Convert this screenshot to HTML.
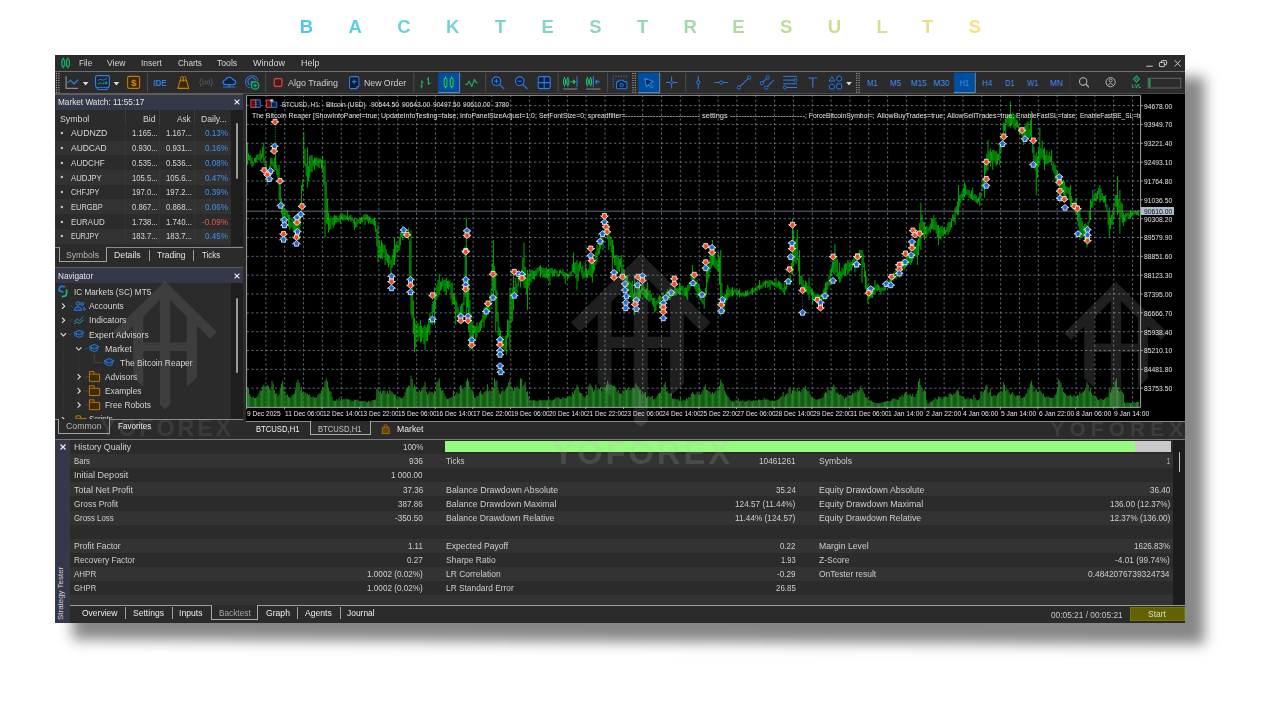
<!DOCTYPE html>
<html lang="en"><head><meta charset="utf-8"><title>Backtest Results</title>
<style>
html,body{margin:0;padding:0;}
body{width:1280px;height:720px;overflow:hidden;background:#fff;position:relative;font-family:"Liberation Sans",sans-serif;}
div,svg,span{position:absolute;box-sizing:border-box;}
.t{white-space:nowrap;}
.ttl{left:299.7px;top:13.1px;height:28px;white-space:pre;font-size:18.5px;line-height:28px;font-weight:bold;letter-spacing:35.4px;word-spacing:-40.54px;color:transparent;background:linear-gradient(90deg,rgb(77,200,232) 0px,rgb(118,211,208) 160px,rgb(158,216,172) 380px,rgb(205,222,140) 540px,rgb(250,224,128) 682px);-webkit-background-clip:text;background-clip:text;}
</style></head>
<body>
<div class="ttl">BACKTEST RESULTS</div>
<svg style="left:0;top:0;width:1280px;height:720px" viewBox="0 0 1280 720"><defs><filter id="sb" x="-5%" y="-10%" width="110%" height="120%"><feGaussianBlur stdDeviation="7"/></filter></defs><polygon points="72.5,77 1204.4,77 1204.4,644 72.5,639.5" fill="#000" fill-opacity="0.475" filter="url(#sb)"/></svg>
<div style="left:55.2px;top:55.45px;width:1130.25px;height:567.35px;background:#2b2b2b;"></div>
<svg style="left:59.5px;top:57.4px;width:12px;height:12px" viewBox="0 0 12 12"><g fill="#0c4a2c" stroke="#1fae6a" stroke-width="1.15"><rect x="1.8" y="2.5" width="2.9" height="6.9" rx="1.1"/><rect x="6.5" y="2.5" width="2.9" height="6.9" rx="1.1"/><path d="M3.25 0.6V2.5M3.25 9.4V11.3M7.95 0.6V2.5M7.95 9.4V11.3" fill="none"/></g></svg>
<div class="t" style="top:57.94px;font-size:8.7px;line-height:11.31px;color:#d6d6d6;left:78.75px;transform-origin:0 50%;transform:scaleX(0.9416);">File</div>
<div class="t" style="top:57.94px;font-size:8.7px;line-height:11.31px;color:#d6d6d6;left:107.15px;transform-origin:0 50%;transform:scaleX(0.9866);">View</div>
<div class="t" style="top:57.94px;font-size:8.7px;line-height:11.31px;color:#d6d6d6;left:141.4px;transform-origin:0 50%;transform:scaleX(0.9628);">Insert</div>
<div class="t" style="top:57.94px;font-size:8.7px;line-height:11.31px;color:#d6d6d6;left:177.65px;transform-origin:0 50%;transform:scaleX(0.9346);">Charts</div>
<div class="t" style="top:57.94px;font-size:8.7px;line-height:11.31px;color:#d6d6d6;left:217.15px;transform-origin:0 50%;transform:scaleX(0.9946);">Tools</div>
<div class="t" style="top:57.94px;font-size:8.7px;line-height:11.31px;color:#d6d6d6;left:252.65px;transform-origin:0 50%;transform:scaleX(1.0406);">Window</div>
<div class="t" style="top:57.94px;font-size:8.7px;line-height:11.31px;color:#d6d6d6;left:300.9px;transform-origin:0 50%;transform:scaleX(1.0311);">Help</div>
<svg style="left:1144px;top:58px;width:40px;height:12px" viewBox="0 0 40 12"><g fill="none" stroke="#d8d8d8" stroke-width="0.9"><path d="M2.2 8.2H8.8"/><rect x="15.4" y="4.4" width="5" height="4.2" rx="0.6"/><path d="M17.4 4.4V3.2Q17.4 2.6 18 2.6H22Q22.6 2.6 22.6 3.2V6.2Q22.6 6.8 22 6.8H20.4"/><path d="M30.6 2.2L36.6 8.6M36.6 2.2L30.6 8.6"/></g></svg>
<div style="left:55.2px;top:71.2px;width:1130.25px;height:0.9px;background:#6e6e6e;"></div>
<div style="left:55.2px;top:93.2px;width:1130.25px;height:0.9px;background:#484848;"></div>
<div style="left:55.2px;top:93.3px;width:188px;height:1.4px;background:#5e5e5e;"></div>
<svg style="left:0;top:0;width:1280px;height:100px" viewBox="0 0 1280 100" font-family="Liberation Sans, sans-serif"><rect x="56" y="72.9" width="1.1" height="1.1" fill="#a8a8a8"/><rect x="56" y="75.26" width="1.1" height="1.1" fill="#a8a8a8"/><rect x="56" y="77.61" width="1.1" height="1.1" fill="#a8a8a8"/><rect x="56" y="79.97" width="1.1" height="1.1" fill="#a8a8a8"/><rect x="56" y="82.32" width="1.1" height="1.1" fill="#a8a8a8"/><rect x="56" y="84.68" width="1.1" height="1.1" fill="#a8a8a8"/><rect x="56" y="87.03" width="1.1" height="1.1" fill="#a8a8a8"/><rect x="56" y="89.39" width="1.1" height="1.1" fill="#a8a8a8"/><rect x="56" y="91.74" width="1.1" height="1.1" fill="#a8a8a8"/><rect x="58.36" y="72.9" width="1.1" height="1.1" fill="#a8a8a8"/><rect x="58.36" y="75.26" width="1.1" height="1.1" fill="#a8a8a8"/><rect x="58.36" y="77.61" width="1.1" height="1.1" fill="#a8a8a8"/><rect x="58.36" y="79.97" width="1.1" height="1.1" fill="#a8a8a8"/><rect x="58.36" y="82.32" width="1.1" height="1.1" fill="#a8a8a8"/><rect x="58.36" y="84.68" width="1.1" height="1.1" fill="#a8a8a8"/><rect x="58.36" y="87.03" width="1.1" height="1.1" fill="#a8a8a8"/><rect x="58.36" y="89.39" width="1.1" height="1.1" fill="#a8a8a8"/><rect x="58.36" y="91.74" width="1.1" height="1.1" fill="#a8a8a8"/><path d="M66.1 76.2V88.3H78.1" stroke="#8a8a8a" stroke-width="1.25" fill="none"/><path d="M68 82.7L70.5 80.2L74 84L77.8 80" stroke="#2f7be0" stroke-width="1.2" fill="none" stroke-linejoin="round" stroke-linecap="round"/><path d="M82.8 82.1h5.6l-2.8 3.3z" fill="#dcdcdc"/><path d="M97.2 75.6H107.7Q109.4 75.6 109.4 77.3V85.8Q109.4 87.3 107.9 87.6L107 89.5H98L97 87.6Q95.5 87.3 95.5 85.8V77.3Q95.5 75.6 97.2 75.6Z" stroke="#2f7be0" stroke-width="1.15" fill="#1c2634"/><path d="M96.2 87.4H108.8" stroke="#2f7be0" stroke-width="0.9"/><path d="M98 80.6Q99.6 78.6 101.2 79.6T104.2 79.8T107 78.4" stroke="#2f7be0" stroke-width="0.9" fill="none"/><path d="M98.4 84.2V83M100 84.2V82.3M101.9 84.2V83M103.7 84.2V82.2M105.4 84.2V81.6M106.8 84.2V81.4" stroke="#1fae6a" stroke-width="0.95" fill="none"/><path d="M113.6 82.1h5.6l-2.8 3.3z" fill="#dcdcdc"/><rect x="127.6" y="76.4" width="12" height="12" rx="1.7" stroke="#c27a08" stroke-width="1.1" fill="#3a2804"/><text x="133.6" y="86.2" font-size="9.6" font-weight="bold" fill="#e08a08" text-anchor="middle">$</text><path d="M147.5 72.9V92.3" stroke="#505050" stroke-width="0.9" fill="none"/><text x="153.6" y="86" font-size="9.4" font-weight="bold" fill="#2f7be0" textLength="13" lengthAdjust="spacingAndGlyphs">IDE</text><path d="M180.2 80.2H186.4L188.7 88.4H177.9Z" stroke="#c27a08" stroke-width="1.1" fill="#3a2804" stroke-linejoin="round"/><path d="M180.6 81.6V78.3Q180.6 76.5 182 76.5Q183.3 76.5 183.3 78.3V81.6M183.3 81.6V78.3Q183.3 76.5 184.7 76.5Q186 76.5 186 78.3V81.6" stroke="#c27a08" stroke-width="0.9" fill="none"/><g stroke="#585858" stroke-width="0.95" fill="none"><circle cx="206.1" cy="82.4" r="1.5"/><path d="M203.4 79.6Q201.8 82.4 203.4 85.2M208.8 79.6Q210.4 82.4 208.8 85.2M201.2 78.2Q198.4 82.4 201.2 86.6M211 78.2Q213.8 82.4 211 86.6"/></g><path d="M226 84.6Q223 84.6 223 82.3Q223 80.2 225.6 80Q226.2 77.3 229.2 77.2Q232 77.2 232.9 79.7Q235.6 79.8 235.6 82.2Q235.6 84.6 233 84.6Z" stroke="#2f7be0" stroke-width="1.15" fill="#0c2240" stroke-linejoin="round"/><path d="M229.3 84.6V87M223.2 87H235.4" stroke="#2f7be0" stroke-width="1.1" fill="none"/><g stroke="#2f7be0" stroke-width="1.05" fill="none"><path d="M250 87.9A6.2 6.2 0 1 1 258 81"/><path d="M250.6 85.3A3.9 3.9 0 1 1 255.5 80.3"/><circle cx="252" cy="82.3" r="1.1" fill="#2f7be0"/></g><circle cx="255.1" cy="85.4" r="3.7" stroke="#1fae6a" stroke-width="1.2" fill="#0a4a2a"/><path d="M253.2 85.4H257M255.1 83.5V87.3" stroke="#1fae6a" stroke-width="1"/><path d="M265.7 72.9V92.3" stroke="#505050" stroke-width="0.9" fill="none"/><rect x="274.3" y="78.6" width="7.6" height="7.8" rx="1.3" stroke="#d24a44" stroke-width="1.2" fill="#481a10"/><path d="M351 76.6H357.4Q358.9 76.6 358.9 78.1V86.2L356.6 88.6H351Q349.5 88.6 349.5 87.1V78.1Q349.5 76.6 351 76.6Z" stroke="#2f7be0" stroke-width="1.05" fill="#101c30" stroke-linejoin="round"/><path d="M352 81.6H356.4M354.2 79.4V83.8" stroke="#2f7be0" stroke-width="1.1"/><path d="M356.3 88.9V86.3H359Z" fill="#2f7be0"/><path d="M413.8 72.9V92.3" stroke="#505050" stroke-width="0.9" fill="none"/><path d="M421.8 80.2V88.4M420.2 86.2H421.8M421.8 82.4H423.4M428.4 77V85M426.8 79.2H428.4M428.4 83.4H430.6" stroke="#1fae6a" stroke-width="1.15" fill="none"/><rect x="438.2" y="72.6" width="21.4" height="20.2" fill="#004f9e"/><path d="M438.2 92.6H459.6V72.6" stroke="#b9c4d2" stroke-width="0.7" fill="none" opacity="0.8"/><g stroke="#2ac47a" stroke-width="1.05" fill="#0a5a30"><rect x="444.2" y="78.3" width="2.7" height="8.4" rx="1"/><rect x="450.3" y="78.3" width="2.7" height="8.4" rx="1"/><path d="M445.55 76.6V78.3M445.55 86.7V88.6M451.65 76.6V78.3M451.65 86.7V88.6" fill="none"/></g><path d="M465.4 84.4H467.2L469.2 81.3L471.8 86.4L474.4 79.4L476.2 82.6H477.6" stroke="#1fae6a" stroke-width="1.15" fill="none" stroke-linejoin="round"/><path d="M485.7 72.9V92.3" stroke="#505050" stroke-width="0.9" fill="none"/><circle cx="496.4" cy="81.2" r="4.3" stroke="#2f7be0" stroke-width="1.15" fill="#0c2240"/><path d="M499.6 84.4L503.7 88.6" stroke="#2f7be0" stroke-width="1.25" stroke-linecap="round"/><path d="M494.2 81.2H498.6" stroke="#2f7be0" stroke-width="1.1"/><path d="M496.4 79V83.4" stroke="#2f7be0" stroke-width="1.1"/><circle cx="519.7" cy="81.2" r="4.3" stroke="#2f7be0" stroke-width="1.15" fill="#0c2240"/><path d="M522.9 84.4L527 88.6" stroke="#2f7be0" stroke-width="1.25" stroke-linecap="round"/><path d="M517.5 81.2H521.9" stroke="#2f7be0" stroke-width="1.1"/><rect x="538.2" y="76.6" width="12" height="12" rx="1.6" stroke="#2f7be0" stroke-width="1.15" fill="#0c2240"/><path d="M544.2 76.6V88.6M538.2 82.6H550.2" stroke="#2f7be0" stroke-width="1.1"/><path d="M558.1 72.9V92.3" stroke="#505050" stroke-width="0.9" fill="none"/><g stroke="#2ac47a" stroke-width="0.95" fill="#0a5a30"><rect x="563.6" y="78.6" width="1.9" height="6.2" rx="0.8"/><rect x="566.9" y="78.6" width="1.9" height="6.2" rx="0.8"/><path d="M564.55 77V78.6M564.55 84.8V86.6M567.85 77V78.6M567.85 84.8V86.6" fill="none"/></g><path d="M570.4 81.8H575M573.2 79.8L575.2 81.8L573.2 83.8" stroke="#2ac47a" stroke-width="1.05" fill="none"/><path d="M577 76.2V87" stroke="#2f7be0" stroke-width="1.1"/><path d="M563.4 89H577.4" stroke="#808080" stroke-width="1.1"/><g stroke="#2ac47a" stroke-width="0.95" fill="#0a5a30"><rect x="586.4" y="78.6" width="1.9" height="6.2" rx="0.8"/><rect x="589.7" y="78.6" width="1.9" height="6.2" rx="0.8"/><path d="M587.35 77V78.6M587.35 84.8V86.6M590.65 77V78.6M590.65 84.8V86.6" fill="none"/></g><path d="M593.4 76.2V87" stroke="#2f7be0" stroke-width="1.1"/><path d="M595.6 81.8H600.2M597.4 79.8L595.4 81.8L597.4 83.8" stroke="#2f7be0" stroke-width="1.05" fill="none"/><path d="M586.2 89H600.4" stroke="#808080" stroke-width="1.1"/><path d="M607.6 72.9V92.3" stroke="#505050" stroke-width="0.9" fill="none"/><path d="M613.2 87.6V76.2H626.6V79" stroke="#2f7be0" stroke-width="1.05" fill="none" stroke-dasharray="1.2 1.5"/><path d="M618.2 81.6L619.4 80.2H623L624.2 81.6H625.8Q626.9 81.6 626.9 82.7V87.6Q626.9 88.7 625.8 88.7H617.6Q616.5 88.7 616.5 87.6V82.7Q616.5 81.6 617.6 81.6Z" stroke="#2f7be0" stroke-width="1.05" fill="#0c2240" stroke-linejoin="round"/><circle cx="621.6" cy="85.1" r="1.7" stroke="#2f7be0" stroke-width="0.95" fill="none"/><rect x="632.4" y="72.9" width="1.1" height="1.1" fill="#a8a8a8"/><rect x="632.4" y="75.26" width="1.1" height="1.1" fill="#a8a8a8"/><rect x="632.4" y="77.61" width="1.1" height="1.1" fill="#a8a8a8"/><rect x="632.4" y="79.97" width="1.1" height="1.1" fill="#a8a8a8"/><rect x="632.4" y="82.32" width="1.1" height="1.1" fill="#a8a8a8"/><rect x="632.4" y="84.68" width="1.1" height="1.1" fill="#a8a8a8"/><rect x="632.4" y="87.03" width="1.1" height="1.1" fill="#a8a8a8"/><rect x="632.4" y="89.39" width="1.1" height="1.1" fill="#a8a8a8"/><rect x="632.4" y="91.74" width="1.1" height="1.1" fill="#a8a8a8"/><rect x="634.76" y="72.9" width="1.1" height="1.1" fill="#a8a8a8"/><rect x="634.76" y="75.26" width="1.1" height="1.1" fill="#a8a8a8"/><rect x="634.76" y="77.61" width="1.1" height="1.1" fill="#a8a8a8"/><rect x="634.76" y="79.97" width="1.1" height="1.1" fill="#a8a8a8"/><rect x="634.76" y="82.32" width="1.1" height="1.1" fill="#a8a8a8"/><rect x="634.76" y="84.68" width="1.1" height="1.1" fill="#a8a8a8"/><rect x="634.76" y="87.03" width="1.1" height="1.1" fill="#a8a8a8"/><rect x="634.76" y="89.39" width="1.1" height="1.1" fill="#a8a8a8"/><rect x="634.76" y="91.74" width="1.1" height="1.1" fill="#a8a8a8"/><rect x="638.2" y="72.6" width="21.5" height="20.2" fill="#004f9e"/><path d="M638.2 92.6H659.7V72.6" stroke="#b9c4d2" stroke-width="0.7" fill="none" opacity="0.8"/><path d="M644.6 78.2L653.4 81.6L650 83.2L652.8 86.6L651.2 87.8L648.6 84.4L646.4 86.8Z" stroke="#2f7be0" stroke-width="1.05" fill="#062a52" stroke-linejoin="round"/><path d="M665.8 82.5H677.4M671.6 76.4V88.6" stroke="#2f7be0" stroke-width="1.05" fill="none"/><circle cx="671.6" cy="82.5" r="1.3" fill="#0c2240" stroke="#2f7be0" stroke-width="0.9"/><path d="M685.7 72.9V92.3" stroke="#505050" stroke-width="0.9" fill="none"/><path d="M698.2 75.8V89.2" stroke="#2f7be0" stroke-width="1.05"/><circle cx="698.2" cy="82.5" r="1.6" fill="#0c2240" stroke="#2f7be0" stroke-width="1"/><path d="M714.2 82.5H728" stroke="#2f7be0" stroke-width="1.05"/><circle cx="721.2" cy="82.5" r="1.6" fill="#0c2240" stroke="#2f7be0" stroke-width="1"/><path d="M739 87.4L749.2 77.6" stroke="#2f7be0" stroke-width="1.05"/><circle cx="738.9" cy="87.5" r="1.6" fill="#0c2240" stroke="#2f7be0" stroke-width="1"/><circle cx="749.3" cy="77.5" r="1.6" fill="#0c2240" stroke="#2f7be0" stroke-width="1"/><path d="M761.8 83.2L767.8 77.4M766.4 87.6L773.8 80" stroke="#2f7be0" stroke-width="1.05"/><circle cx="761.8" cy="83.2" r="1.6" fill="#0c2240" stroke="#2f7be0" stroke-width="1"/><circle cx="767.8" cy="77.4" r="1.6" fill="#0c2240" stroke="#2f7be0" stroke-width="1"/><circle cx="766.4" cy="87.6" r="1.6" fill="#0c2240" stroke="#2f7be0" stroke-width="1"/><path d="M783.2 76.4H797M783.2 80.1H797M783.2 83.8H797M783.2 87.5H797" stroke="#2f7be0" stroke-width="1"/><circle cx="795.4" cy="80.1" r="1.5" fill="#0c2240" stroke="#2f7be0" stroke-width="1"/><circle cx="784.8" cy="87.5" r="1.5" fill="#0c2240" stroke="#2f7be0" stroke-width="1"/><path d="M808.2 78H817.4M812.8 78V87.6" stroke="#2f7be0" stroke-width="1.2" fill="none"/><g stroke="#2f7be0" stroke-width="1" fill="#0c2240" stroke-linejoin="round"><path d="M831.9 76.6L834.6 81H829.2Z"/><circle cx="839.2" cy="78.7" r="2.5"/><path d="M831.9 84L834.6 86L833.6 89H830.2L829.2 86Z"/><rect x="836.8" y="84" width="4.8" height="4.8" rx="0.8"/></g><path d="M846.2 82.1h5.6l-2.8 3.3z" fill="#dcdcdc"/><rect x="856.2" y="72.9" width="1.1" height="1.1" fill="#a8a8a8"/><rect x="856.2" y="75.26" width="1.1" height="1.1" fill="#a8a8a8"/><rect x="856.2" y="77.61" width="1.1" height="1.1" fill="#a8a8a8"/><rect x="856.2" y="79.97" width="1.1" height="1.1" fill="#a8a8a8"/><rect x="856.2" y="82.32" width="1.1" height="1.1" fill="#a8a8a8"/><rect x="856.2" y="84.68" width="1.1" height="1.1" fill="#a8a8a8"/><rect x="856.2" y="87.03" width="1.1" height="1.1" fill="#a8a8a8"/><rect x="856.2" y="89.39" width="1.1" height="1.1" fill="#a8a8a8"/><rect x="856.2" y="91.74" width="1.1" height="1.1" fill="#a8a8a8"/><rect x="858.56" y="72.9" width="1.1" height="1.1" fill="#a8a8a8"/><rect x="858.56" y="75.26" width="1.1" height="1.1" fill="#a8a8a8"/><rect x="858.56" y="77.61" width="1.1" height="1.1" fill="#a8a8a8"/><rect x="858.56" y="79.97" width="1.1" height="1.1" fill="#a8a8a8"/><rect x="858.56" y="82.32" width="1.1" height="1.1" fill="#a8a8a8"/><rect x="858.56" y="84.68" width="1.1" height="1.1" fill="#a8a8a8"/><rect x="858.56" y="87.03" width="1.1" height="1.1" fill="#a8a8a8"/><rect x="858.56" y="89.39" width="1.1" height="1.1" fill="#a8a8a8"/><rect x="858.56" y="91.74" width="1.1" height="1.1" fill="#a8a8a8"/><rect x="953.9" y="72.6" width="21.4" height="20.2" fill="#004f9e"/><path d="M953.9 92.6H975.3V72.6" stroke="#b9c4d2" stroke-width="0.7" fill="none" opacity="0.8"/><text x="867.3" y="86.2" font-size="8.8" fill="#3a8af0" textLength="10.4" lengthAdjust="spacingAndGlyphs">M1</text><text x="890.05" y="86.2" font-size="8.8" fill="#3a8af0" textLength="11.15" lengthAdjust="spacingAndGlyphs">M5</text><text x="910.9" y="86.2" font-size="8.8" fill="#3a8af0" textLength="15.8" lengthAdjust="spacingAndGlyphs">M15</text><text x="933.5" y="86.2" font-size="8.8" fill="#3a8af0" textLength="16.2" lengthAdjust="spacingAndGlyphs">M30</text><text x="959.7" y="86.2" font-size="8.8" fill="#3a8af0" textLength="9.4" lengthAdjust="spacingAndGlyphs">H1</text><text x="982.3" y="86.2" font-size="8.8" fill="#3a8af0" textLength="9.9" lengthAdjust="spacingAndGlyphs">H4</text><text x="1005.3" y="86.2" font-size="8.8" fill="#3a8af0" textLength="9.4" lengthAdjust="spacingAndGlyphs">D1</text><text x="1027.3" y="86.2" font-size="8.8" fill="#3a8af0" textLength="11.15" lengthAdjust="spacingAndGlyphs">W1</text><text x="1050.05" y="86.2" font-size="8.8" fill="#3a8af0" textLength="13.05" lengthAdjust="spacingAndGlyphs">MN</text><path d="M1070.2 72.9V92.3" stroke="#3a3a3a" stroke-width="0.9"/><circle cx="1083.2" cy="81.4" r="3.7" stroke="#b6b6b6" stroke-width="1.05" fill="none"/><path d="M1085.9 84.2L1088.6 87" stroke="#b6b6b6" stroke-width="1.15" stroke-linecap="round"/><circle cx="1110.6" cy="82.2" r="4.6" stroke="#b6b6b6" stroke-width="1" fill="none"/><circle cx="1110.6" cy="80.6" r="1.5" stroke="#b6b6b6" stroke-width="0.9" fill="none"/><path d="M1107.6 85.6Q1110.6 81.6 1113.6 85.6" stroke="#b6b6b6" stroke-width="0.9" fill="none"/><path d="M1136.5 75.9L1139.5 79L1136.5 82.1L1133.5 79Z" stroke="#1fae6a" stroke-width="1.05" fill="#0a4a2a"/><path d="M1135.2 79H1137.8" stroke="#1fae6a" stroke-width="0.8"/><text x="1131.8" y="88.1" font-size="5.9" font-weight="bold" fill="#1fae6a" textLength="9.6" lengthAdjust="spacingAndGlyphs">LVL</text><rect x="1148.2" y="78.3" width="32.6" height="9.7" stroke="#6a6a6a" stroke-width="0.9" fill="#2b2b2b"/><rect x="1148.7" y="78.8" width="1.8" height="8.7" fill="#1aa04a"/></svg>
<div class="t" style="top:77.52px;font-size:9.2px;line-height:11.96px;color:#cfcfcf;left:288.15px;transform-origin:0 50%;transform:scaleX(0.9698);">Algo Trading</div>
<div class="t" style="top:77.52px;font-size:9.2px;line-height:11.96px;color:#cfcfcf;left:363.9px;transform-origin:0 50%;transform:scaleX(0.9488);">New Order</div>
<div style="left:55.7px;top:94.7px;width:187.5px;height:15.2px;background:#353849;"></div>
<div class="t" style="top:97.44px;font-size:8.7px;line-height:11.31px;color:#e4e4e4;left:57.65px;transform-origin:0 50%;transform:scaleX(0.9459);">Market Watch: 11:55:17</div>
<svg style="left:233.8px;top:99.0px;width:6px;height:6px" viewBox="0 0 6 6"><path d="M0.6 0.6L5.4 5.4M5.4 0.6L0.6 5.4" stroke="#f0f0f0" stroke-width="1.15"/></svg>
<div style="left:55.2px;top:109.9px;width:175.4px;height:15.9px;background:#2b2b2b;"></div>
<div style="left:124.6px;top:110.2px;width:0.8px;height:15.2px;background:#3c3c3c;"></div>
<div style="left:158.8px;top:110.2px;width:0.8px;height:15.2px;background:#3c3c3c;"></div>
<div style="left:193.8px;top:110.2px;width:0.8px;height:15.2px;background:#3c3c3c;"></div>
<div class="t" style="top:112.66px;font-size:9.3px;line-height:12.09px;color:#d6d6d6;left:60.15px;transform-origin:0 50%;transform:scaleX(0.9448);">Symbol</div>
<div class="t" style="top:112.66px;font-size:9.3px;line-height:12.09px;color:#d6d6d6;left:142.75px;transform-origin:0 50%;transform:scaleX(0.9448);">Bid</div>
<div class="t" style="top:112.66px;font-size:9.3px;line-height:12.09px;color:#d6d6d6;left:176.75px;transform-origin:0 50%;transform:scaleX(0.8837);">Ask</div>
<div class="t" style="top:112.66px;font-size:9.3px;line-height:12.09px;color:#d6d6d6;left:200.9px;transform-origin:0 50%;transform:scaleX(0.9267);">Daily...</div>
<div style="left:55.2px;top:125.8px;width:175.4px;height:14.72px;background:#2b2b2b;"></div>
<svg style="left:59px;top:130.26px;width:6px;height:6px" viewBox="0 0 6 6"><circle cx="2.9" cy="3" r="1.25" fill="#c4c4c4"/></svg>
<div class="t" style="top:128.34px;font-size:8.8px;line-height:11.44px;color:#d6d6d6;left:71.4px;transform-origin:0 50%;transform:scaleX(0.9941);">AUDNZD</div>
<div class="t" style="top:128.34px;font-size:8.8px;line-height:11.44px;color:#d6d6d6;left:131.75px;transform-origin:0 50%;transform:scaleX(0.8720);">1.165...</div>
<div class="t" style="top:128.34px;font-size:8.8px;line-height:11.44px;color:#d6d6d6;left:166.35px;transform-origin:0 50%;transform:scaleX(0.8857);">1.167...</div>
<div class="t" style="top:128.34px;font-size:8.8px;line-height:11.44px;color:#3d94f0;left:204.75px;transform-origin:0 50%;transform:scaleX(0.9258);">0.13%</div>
<div style="left:55.2px;top:140.52px;width:175.4px;height:14.72px;background:#323232;"></div>
<svg style="left:59px;top:144.98px;width:6px;height:6px" viewBox="0 0 6 6"><circle cx="2.9" cy="3" r="1.25" fill="#c4c4c4"/></svg>
<div class="t" style="top:143.06px;font-size:8.8px;line-height:11.44px;color:#d6d6d6;left:71.4px;transform-origin:0 50%;transform:scaleX(0.9607);">AUDCAD</div>
<div class="t" style="top:143.06px;font-size:8.8px;line-height:11.44px;color:#d6d6d6;left:131.75px;transform-origin:0 50%;transform:scaleX(0.8720);">0.930...</div>
<div class="t" style="top:143.06px;font-size:8.8px;line-height:11.44px;color:#d6d6d6;left:166.35px;transform-origin:0 50%;transform:scaleX(0.8857);">0.931...</div>
<div class="t" style="top:143.06px;font-size:8.8px;line-height:11.44px;color:#3d94f0;left:204.75px;transform-origin:0 50%;transform:scaleX(0.9258);">0.16%</div>
<div style="left:55.2px;top:155.24px;width:175.4px;height:14.72px;background:#2b2b2b;"></div>
<svg style="left:59px;top:159.7px;width:6px;height:6px" viewBox="0 0 6 6"><circle cx="2.9" cy="3" r="1.25" fill="#c4c4c4"/></svg>
<div class="t" style="top:157.78px;font-size:8.8px;line-height:11.44px;color:#d6d6d6;left:71.4px;transform-origin:0 50%;transform:scaleX(0.9191);">AUDCHF</div>
<div class="t" style="top:157.78px;font-size:8.8px;line-height:11.44px;color:#d6d6d6;left:131.75px;transform-origin:0 50%;transform:scaleX(0.8720);">0.535...</div>
<div class="t" style="top:157.78px;font-size:8.8px;line-height:11.44px;color:#d6d6d6;left:166.35px;transform-origin:0 50%;transform:scaleX(0.8857);">0.536...</div>
<div class="t" style="top:157.78px;font-size:8.8px;line-height:11.44px;color:#3d94f0;left:204.75px;transform-origin:0 50%;transform:scaleX(0.9258);">0.08%</div>
<div style="left:55.2px;top:169.96px;width:175.4px;height:14.72px;background:#323232;"></div>
<svg style="left:59px;top:174.42px;width:6px;height:6px" viewBox="0 0 6 6"><circle cx="2.9" cy="3" r="1.25" fill="#c4c4c4"/></svg>
<div class="t" style="top:172.5px;font-size:8.8px;line-height:11.44px;color:#d6d6d6;left:71.4px;transform-origin:0 50%;transform:scaleX(0.8842);">AUDJPY</div>
<div class="t" style="top:172.5px;font-size:8.8px;line-height:11.44px;color:#d6d6d6;left:131.75px;transform-origin:0 50%;transform:scaleX(0.8720);">105.5...</div>
<div class="t" style="top:172.5px;font-size:8.8px;line-height:11.44px;color:#d6d6d6;left:166.35px;transform-origin:0 50%;transform:scaleX(0.8857);">105.6...</div>
<div class="t" style="top:172.5px;font-size:8.8px;line-height:11.44px;color:#3d94f0;left:204.75px;transform-origin:0 50%;transform:scaleX(0.9258);">0.47%</div>
<div style="left:55.2px;top:184.68px;width:175.4px;height:14.72px;background:#2b2b2b;"></div>
<svg style="left:59px;top:189.14px;width:6px;height:6px" viewBox="0 0 6 6"><circle cx="2.9" cy="3" r="1.25" fill="#c4c4c4"/></svg>
<div class="t" style="top:187.22px;font-size:8.8px;line-height:11.44px;color:#d6d6d6;left:71.4px;transform-origin:0 50%;transform:scaleX(0.8312);">CHFJPY</div>
<div class="t" style="top:187.22px;font-size:8.8px;line-height:11.44px;color:#d6d6d6;left:131.75px;transform-origin:0 50%;transform:scaleX(0.8720);">197.0...</div>
<div class="t" style="top:187.22px;font-size:8.8px;line-height:11.44px;color:#d6d6d6;left:166.35px;transform-origin:0 50%;transform:scaleX(0.8857);">197.2...</div>
<div class="t" style="top:187.22px;font-size:8.8px;line-height:11.44px;color:#3d94f0;left:204.75px;transform-origin:0 50%;transform:scaleX(0.9258);">0.39%</div>
<div style="left:55.2px;top:199.4px;width:175.4px;height:14.72px;background:#323232;"></div>
<svg style="left:59px;top:203.86px;width:6px;height:6px" viewBox="0 0 6 6"><circle cx="2.9" cy="3" r="1.25" fill="#c4c4c4"/></svg>
<div class="t" style="top:201.94px;font-size:8.8px;line-height:11.44px;color:#d6d6d6;left:71.4px;transform-origin:0 50%;transform:scaleX(0.8530);">EURGBP</div>
<div class="t" style="top:201.94px;font-size:8.8px;line-height:11.44px;color:#d6d6d6;left:131.75px;transform-origin:0 50%;transform:scaleX(0.8720);">0.867...</div>
<div class="t" style="top:201.94px;font-size:8.8px;line-height:11.44px;color:#d6d6d6;left:166.35px;transform-origin:0 50%;transform:scaleX(0.8857);">0.868...</div>
<div class="t" style="top:201.94px;font-size:8.8px;line-height:11.44px;color:#3d94f0;left:204.75px;transform-origin:0 50%;transform:scaleX(0.9258);">0.06%</div>
<div style="left:55.2px;top:214.12px;width:175.4px;height:14.72px;background:#2b2b2b;"></div>
<svg style="left:59px;top:218.58px;width:6px;height:6px" viewBox="0 0 6 6"><circle cx="2.9" cy="3" r="1.25" fill="#c4c4c4"/></svg>
<div class="t" style="top:216.66px;font-size:8.8px;line-height:11.44px;color:#d6d6d6;left:71.4px;transform-origin:0 50%;transform:scaleX(0.9069);">EURAUD</div>
<div class="t" style="top:216.66px;font-size:8.8px;line-height:11.44px;color:#d6d6d6;left:131.75px;transform-origin:0 50%;transform:scaleX(0.8720);">1.738...</div>
<div class="t" style="top:216.66px;font-size:8.8px;line-height:11.44px;color:#d6d6d6;left:166.35px;transform-origin:0 50%;transform:scaleX(0.8857);">1.740...</div>
<div class="t" style="top:216.66px;font-size:8.8px;line-height:11.44px;color:#e05858;left:201.75px;transform-origin:0 50%;transform:scaleX(0.9361);">-0.09%</div>
<div style="left:55.2px;top:228.84px;width:175.4px;height:14.72px;background:#323232;"></div>
<svg style="left:59px;top:233.3px;width:6px;height:6px" viewBox="0 0 6 6"><circle cx="2.9" cy="3" r="1.25" fill="#c4c4c4"/></svg>
<div class="t" style="top:231.38px;font-size:8.8px;line-height:11.44px;color:#d6d6d6;left:71.4px;transform-origin:0 50%;transform:scaleX(0.8050);">EURJPY</div>
<div class="t" style="top:231.38px;font-size:8.8px;line-height:11.44px;color:#d6d6d6;left:131.75px;transform-origin:0 50%;transform:scaleX(0.8720);">183.7...</div>
<div class="t" style="top:231.38px;font-size:8.8px;line-height:11.44px;color:#d6d6d6;left:166.35px;transform-origin:0 50%;transform:scaleX(0.8857);">183.7...</div>
<div class="t" style="top:231.38px;font-size:8.8px;line-height:11.44px;color:#3d94f0;left:204.75px;transform-origin:0 50%;transform:scaleX(0.9258);">0.45%</div>
<div style="left:124.6px;top:125.8px;width:0.8px;height:117.76px;background:rgba(255,255,255,0.035);"></div>
<div style="left:158.8px;top:125.8px;width:0.8px;height:117.76px;background:rgba(255,255,255,0.035);"></div>
<div style="left:193.8px;top:125.8px;width:0.8px;height:117.76px;background:rgba(255,255,255,0.035);"></div>
<div style="left:230.6px;top:109.5px;width:12.6px;height:136.2px;background:#1e1e1e;"></div>
<div style="left:236.3px;top:122.5px;width:1.3px;height:56.3px;background:#9a9a9a;border-radius:1px;"></div>
<div style="left:55.2px;top:245.6px;width:188px;height:22.5px;background:#2b2b2b;"></div>
<div style="left:106.2px;top:246.7px;width:137px;height:0.9px;background:#8a8a8a;"></div>
<div style="left:55.2px;top:246.7px;width:3.8px;height:0.9px;background:#8a8a8a;"></div>
<div style="left:58.6px;top:246.7px;width:48px;height:15.4px;background:#2b2b2b;border:0.9px solid #a0a0a0;border-top:none;"></div>
<div class="t" style="top:250.12px;font-size:8.9px;line-height:11.57px;color:#b4b4b4;left:65.9px;transform-origin:0 50%;transform:scaleX(0.9728);">Symbols</div>
<div class="t" style="top:250.12px;font-size:8.9px;line-height:11.57px;color:#e2e2e2;left:114.4px;transform-origin:0 50%;transform:scaleX(0.9814);">Details</div>
<div style="left:149.1px;top:249.6px;width:0.9px;height:11.2px;background:#9a9a9a;"></div>
<div class="t" style="top:250.12px;font-size:8.9px;line-height:11.57px;color:#e2e2e2;left:156.9px;transform-origin:0 50%;transform:scaleX(0.9615);">Trading</div>
<div style="left:193.4px;top:249.6px;width:0.9px;height:11.2px;background:#9a9a9a;"></div>
<div class="t" style="top:250.12px;font-size:8.9px;line-height:11.57px;color:#e2e2e2;left:201.65px;transform-origin:0 50%;transform:scaleX(0.8907);">Ticks</div>
<div style="left:55.2px;top:267.4px;width:188px;height:0.9px;background:#5a5a5a;"></div>
<div style="left:55.7px;top:268.3px;width:187.5px;height:14.6px;background:#353849;"></div>
<div class="t" style="top:271.05px;font-size:8.7px;line-height:11.31px;color:#e4e4e4;left:57.65px;transform-origin:0 50%;transform:scaleX(0.9453);">Navigator</div>
<svg style="left:233.8px;top:272.8px;width:6px;height:6px" viewBox="0 0 6 6"><path d="M0.6 0.6L5.4 5.4M5.4 0.6L0.6 5.4" stroke="#f0f0f0" stroke-width="1.15"/></svg>
<div style="left:55.2px;top:282.9px;width:175.4px;height:136.4px;background:#2b2b2b;overflow:hidden;"></div>
<div style="left:230.6px;top:282.9px;width:12.6px;height:136.4px;background:#1e1e1e;"></div>
<div style="left:236.3px;top:297.5px;width:1.3px;height:75px;background:#9a9a9a;border-radius:1px;"></div>
<svg style="left:0;top:0;width:230.6px;height:419.3px" viewBox="0 0 230.6 419.3"><path d="M65 286.7L61.4 286.3Q59.2 287 59.2 289V290.6L63.4 292.2" stroke="#1f7fe0" stroke-width="1.7" fill="none" stroke-linejoin="round"/><path d="M66.6 289.4V293.6Q66.6 295.6 64.6 296.2L61.6 296.7" stroke="#12b886" stroke-width="1.7" fill="none" stroke-linejoin="round"/><circle cx="66.3" cy="287" r="1.5" fill="#4a2c12"/><path d="M62 303.43l2.7 2.7l-2.7 2.7" stroke="#e0e0e0" stroke-width="1.1" fill="none"/><g stroke="#2f7be0" stroke-width="0.95" fill="#123a70"><circle cx="78" cy="303.53" r="1.8"/><path d="M74.4 310.33q0 -3.6 3.6 -3.6t3.6 3.6z"/><circle cx="82.2" cy="303.93" r="1.5"/><path d="M82.6 306.93q2.6 0.2 2.6 3h-2.4"/></g><path d="M62 317.56l2.7 2.7l-2.7 2.7" stroke="#e0e0e0" stroke-width="1.1" fill="none"/><path d="M74.2 321.86l3 -3l2.4 2l3.6 -4.4" stroke="#2f7be0" stroke-width="1" fill="none"/><path d="M74.2 324.06l2.6 -2.2l2.6 1.6l3.8 -3.4" stroke="#1fae6a" stroke-width="1" fill="none"/><path d="M60.7 333.19l2.7 2.7l2.7 -2.7" stroke="#e0e0e0" stroke-width="1.1" fill="none"/><path d="M74.2 332.59l5 -2.3l5 2.3l-5 2.3z" fill="#123a70" stroke="#2f7be0" stroke-width="0.95" stroke-linejoin="round"/><path d="M76.2 333.79v2.6q3 1.8 6 0v-2.6" fill="none" stroke="#2f7be0" stroke-width="0.95"/><path d="M74.8 333.19v3" stroke="#2f7be0" stroke-width="0.8"/><path d="M76.1 347.32l2.7 2.7l2.7 -2.7" stroke="#e0e0e0" stroke-width="1.1" fill="none"/><path d="M89.2 346.72l5 -2.3l5 2.3l-5 2.3z" fill="#123a70" stroke="#2f7be0" stroke-width="0.95" stroke-linejoin="round"/><path d="M91.2 347.92v2.6q3 1.8 6 0v-2.6" fill="none" stroke="#2f7be0" stroke-width="0.95"/><path d="M89.8 347.32v3" stroke="#2f7be0" stroke-width="0.8"/><path d="M94.3 354.52V362.65H102.6" stroke="#505050" stroke-width="0.7" fill="none"/><path d="M79 353.52V410.04" stroke="#454545" stroke-width="0.7" fill="none" stroke-dasharray="1.2 1.2"/><path d="M68.6 306.13H72.4" stroke="#4a4a4a" stroke-width="0.7"/><path d="M68.6 320.26H72.4" stroke="#4a4a4a" stroke-width="0.7"/><path d="M68.6 334.39H72.4" stroke="#4a4a4a" stroke-width="0.7"/><path d="M84.4 348.52H87.6" stroke="#4a4a4a" stroke-width="0.7"/><path d="M104.2 360.85l5 -2.3l5 2.3l-5 2.3z" fill="#123a70" stroke="#2f7be0" stroke-width="0.95" stroke-linejoin="round"/><path d="M106.2 362.05v2.6q3 1.8 6 0v-2.6" fill="none" stroke="#2f7be0" stroke-width="0.95"/><path d="M104.8 361.45v3" stroke="#2f7be0" stroke-width="0.8"/><path d="M77.6 374.08l2.7 2.7l-2.7 2.7" stroke="#e0e0e0" stroke-width="1.1" fill="none"/><path d="M84.5 376.78H88.4" stroke="#4a4a4a" stroke-width="0.7"/><path d="M89.4 371.58h4.6v2.6h5.6v7.2h-10.2z" fill="#3e2a04" stroke="#c27a08" stroke-width="0.95" stroke-linejoin="round"/><path d="M89.4 374.18h4.6" stroke="#c27a08" stroke-width="0.8"/><path d="M77.6 388.21l2.7 2.7l-2.7 2.7" stroke="#e0e0e0" stroke-width="1.1" fill="none"/><path d="M84.5 390.91H88.4" stroke="#4a4a4a" stroke-width="0.7"/><path d="M89.4 385.71h4.6v2.6h5.6v7.2h-10.2z" fill="#3e2a04" stroke="#c27a08" stroke-width="0.95" stroke-linejoin="round"/><path d="M89.4 388.31h4.6" stroke="#c27a08" stroke-width="0.8"/><path d="M77.6 402.34l2.7 2.7l-2.7 2.7" stroke="#e0e0e0" stroke-width="1.1" fill="none"/><path d="M84.5 405.04H88.4" stroke="#4a4a4a" stroke-width="0.7"/><path d="M89.4 399.84h4.6v2.6h5.6v7.2h-10.2z" fill="#3e2a04" stroke="#c27a08" stroke-width="0.95" stroke-linejoin="round"/><path d="M89.4 402.44h4.6" stroke="#c27a08" stroke-width="0.8"/><path d="M62 417.07l2.7 2.7l-2.7 2.7" stroke="#e0e0e0" stroke-width="1.1" fill="none"/><path d="M76 415.87h4.6v2.6h5.6v7.2h-10.2z" fill="#3e2a04" stroke="#c27a08" stroke-width="0.95" stroke-linejoin="round"/><path d="M76 418.47h4.6" stroke="#c27a08" stroke-width="0.8"/><path d="M63.7 339.39V415.17" stroke="#454545" stroke-width="0.7" stroke-dasharray="1.2 1.2"/></svg>
<div class="t" style="top:287.18px;font-size:8.8px;line-height:11.44px;color:#d6d6d6;left:73.9px;transform-origin:0 50%;transform:scaleX(0.9288);">IC Markets (SC) MT5</div>
<div class="t" style="top:301.31px;font-size:8.8px;line-height:11.44px;color:#d6d6d6;left:89.4px;transform-origin:0 50%;transform:scaleX(0.9586);">Accounts</div>
<div class="t" style="top:315.44px;font-size:8.8px;line-height:11.44px;color:#d6d6d6;left:89.4px;transform-origin:0 50%;transform:scaleX(0.9816);">Indicators</div>
<div class="t" style="top:329.57px;font-size:8.8px;line-height:11.44px;color:#d6d6d6;left:89.4px;transform-origin:0 50%;transform:scaleX(0.9765);">Expert Advisors</div>
<div class="t" style="top:343.7px;font-size:8.8px;line-height:11.44px;color:#d6d6d6;left:104.65px;transform-origin:0 50%;transform:scaleX(0.9927);">Market</div>
<div class="t" style="top:357.83px;font-size:8.8px;line-height:11.44px;color:#d6d6d6;left:120.15px;transform-origin:0 50%;transform:scaleX(0.9651);">The Bitcoin Reaper</div>
<div class="t" style="top:371.96px;font-size:8.8px;line-height:11.44px;color:#d6d6d6;left:104.65px;transform-origin:0 50%;transform:scaleX(0.9542);">Advisors</div>
<div class="t" style="top:386.09px;font-size:8.8px;line-height:11.44px;color:#d6d6d6;left:104.65px;transform-origin:0 50%;transform:scaleX(0.9434);">Examples</div>
<div class="t" style="top:400.22px;font-size:8.8px;line-height:11.44px;color:#d6d6d6;left:104.65px;transform-origin:0 50%;transform:scaleX(0.9489);">Free Robots</div>
<div style="left:55.2px;top:408px;width:175.4px;height:11.3px;overflow:hidden;"><div class="t" style="top:5.68px;font-size:8.8px;line-height:11.44px;color:#d6d6d6;left:33.95px;transform-origin:0 50%;transform:scaleX(0.8812);">Scripts</div>
</div>
<div style="left:55.2px;top:419.3px;width:188px;height:20.2px;background:#2b2b2b;"></div>
<div style="left:109.2px;top:418.6px;width:134px;height:0.9px;background:#8a8a8a;"></div>
<div style="left:55.2px;top:418.6px;width:3.4px;height:0.9px;background:#8a8a8a;"></div>
<div style="left:58.2px;top:418.6px;width:51.4px;height:15px;background:#2b2b2b;border:0.9px solid #a0a0a0;border-top:none;"></div>
<div class="t" style="top:420.91px;font-size:8.9px;line-height:11.57px;color:#b4b4b4;left:65.9px;transform-origin:0 50%;transform:scaleX(0.9888);">Common</div>
<div class="t" style="top:420.91px;font-size:8.9px;line-height:11.57px;color:#f0f0f0;left:117.65px;transform-origin:0 50%;transform:scaleX(0.9139);">Favorites</div>
<div style="left:245.6px;top:94.4px;width:939.85px;height:326.8px;background:#000;"></div>
<svg style="left:0;top:0;width:1280px;height:425px" viewBox="0 0 1280 425"><path d="M1132.5 95.3V407.4M1113.66 95.3V407.4M1094.82 95.3V407.4M1075.98 95.3V407.4M1057.14 95.3V407.4M1038.3 95.3V407.4M1019.46 95.3V407.4M1000.62 95.3V407.4M981.78 95.3V407.4M962.94 95.3V407.4M944.1 95.3V407.4M925.26 95.3V407.4M906.42 95.3V407.4M887.58 95.3V407.4M868.74 95.3V407.4M849.9 95.3V407.4M831.06 95.3V407.4M812.22 95.3V407.4M793.38 95.3V407.4M774.54 95.3V407.4M755.7 95.3V407.4M736.86 95.3V407.4M718.02 95.3V407.4M699.18 95.3V407.4M680.34 95.3V407.4M661.5 95.3V407.4M642.66 95.3V407.4M623.82 95.3V407.4M604.98 95.3V407.4M586.14 95.3V407.4M567.3 95.3V407.4M548.46 95.3V407.4M529.62 95.3V407.4M510.78 95.3V407.4M491.94 95.3V407.4M473.1 95.3V407.4M454.26 95.3V407.4M435.42 95.3V407.4M416.58 95.3V407.4M397.74 95.3V407.4M378.9 95.3V407.4M360.06 95.3V407.4M341.22 95.3V407.4M322.38 95.3V407.4M303.54 95.3V407.4M284.7 95.3V407.4M265.86 95.3V407.4" stroke="#7c8ca0" stroke-width="0.72" stroke-dasharray="2.3 2.41" stroke-dashoffset="0.5" fill="none"/><path d="M246.7 105.6H1140.6M246.7 124.44H1140.6M246.7 143.28H1140.6M246.7 162.12H1140.6M246.7 180.96H1140.6M246.7 199.8H1140.6M246.7 218.64H1140.6M246.7 237.48H1140.6M246.7 256.32H1140.6M246.7 275.16H1140.6M246.7 294H1140.6M246.7 312.84H1140.6M246.7 331.68H1140.6M246.7 350.52H1140.6M246.7 369.36H1140.6M246.7 388.2H1140.6" stroke="#7c8ca0" stroke-width="0.72" stroke-dasharray="2.3 2.41" stroke-dashoffset="0.05" fill="none"/><path d="M247.3 407V387.1M248.48 407V389.09M249.66 407V394.31M250.83 407V396.26M252.01 407V397.59M253.19 407V396.53M254.37 407V397.97M255.54 407V398.05M256.72 407V397.3M257.9 407V395.76M259.08 407V392.57M260.25 407V390.24M261.43 407V390.49M262.61 407V386.84M263.79 407V384.6M264.96 407V386.84M266.14 407V385.82M267.32 407V384.9M268.5 407V386.31M269.67 407V388.26M270.85 407V390.09M272.03 407V380.85M273.21 407V383.47M274.38 407V390.24M275.56 407V393.79M276.74 407V393.41M277.92 407V396.39M279.1 407V394.28M280.27 407V388.79M281.45 407V383.47M282.63 407V380.85M283.81 407V386.55M284.98 407V391.89M286.16 407V394.73M287.34 407V394.3M288.52 407V396.71M289.69 407V397.44M290.87 407V397.46M292.05 407V394.85M293.23 407V394.79M294.4 407V393.25M295.58 407V389.53M296.76 407V382.34M297.94 407V379.6M299.11 407V382.64M300.29 407V390.26M301.47 407V386.89M302.65 407V392.59M303.82 407V393.59M305 407V392.1M306.18 407V393.59M307.36 407V393.7M308.54 407V395.3M309.71 407V394.27M310.89 407V397M312.07 407V397.42M313.25 407V396.29M314.42 407V397.74M315.6 407V397.47M316.78 407V397.7M317.96 407V395.2M319.13 407V393.38M320.31 407V393.33M321.49 407V390.42M322.67 407V388.42M323.84 407V387.78M325.02 407V381.22M326.2 407V378.35M327.38 407V381.22M328.55 407V387.71M329.73 407V391.14M330.91 407V391.79M332.09 407V396.88M333.26 407V400.47M334.44 407V400.95M335.62 407V400.79M336.8 407V399.07M337.98 407V400.56M339.15 407V397.59M340.33 407V400.59M341.51 407V398.45M342.69 407V399.38M343.86 407V399.05M345.04 407V399.28M346.22 407V398.5M347.4 407V399.37M348.57 407V399.19M349.75 407V399.66M350.93 407V400.84M352.11 407V400.42M353.28 407V401.31M354.46 407V399.67M355.64 407V399.91M356.82 407V399.66M357.99 407V399.62M359.17 407V401.3M360.35 407V400.74M361.53 407V401.66M362.7 407V400.9M363.88 407V401.02M365.06 407V400.95M366.24 407V401.69M367.42 407V402.18M368.59 407V400.96M369.77 407V401.56M370.95 407V401.67M372.13 407V400.25M373.3 407V399.94M374.48 407V400.12M375.66 407V399.41M376.84 407V389.09M378.01 407V387.1M379.19 407V392.82M380.37 407V390.47M381.55 407V393.55M382.72 407V390.96M383.9 407V390.15M385.08 407V391.23M386.26 407V393.83M387.43 407V391.14M388.61 407V393.7M389.79 407V389.6M390.97 407V391.34M392.14 407V391.86M393.32 407V393.71M394.5 407V394.81M395.68 407V394.51M396.86 407V398.17M398.03 407V398.32M399.21 407V396.78M400.39 407V397.78M401.57 407V398.3M402.74 407V398.24M403.92 407V396.19M405.1 407V392.26M406.28 407V388.34M407.45 407V387.62M408.63 407V385.56M409.81 407V385.97M410.99 407V375.85M412.16 407V378.97M413.34 407V387.92M414.52 407V384.6M415.7 407V386.84M416.87 407V391.46M418.05 407V392.25M419.23 407V390.02M420.41 407V392.01M421.58 407V390.06M422.76 407V387.97M423.94 407V385.85M425.12 407V381.67M426.3 407V391.62M427.47 407V394.49M428.65 407V393.4M429.83 407V391.26M431.01 407V392.45M432.18 407V392.1M433.36 407V393.59M434.54 407V390.78M435.72 407V392.32M436.89 407V382.39M438.07 407V381.22M439.25 407V378.35M440.43 407V388.82M441.6 407V391.07M442.78 407V389.88M443.96 407V392.83M445.14 407V396.01M446.31 407V398.26M447.49 407V398.85M448.67 407V398.77M449.85 407V398.01M451.02 407V397.5M452.2 407V397.1M453.38 407V390.43M454.56 407V396.12M455.74 407V394.47M456.91 407V392.1M458.09 407V393.59M459.27 407V393.33M460.45 407V385.21M461.62 407V386.36M462.8 407V388.56M463.98 407V389.72M465.16 407V387.05M466.33 407V381.22M467.51 407V378.35M468.69 407V381.22M469.87 407V386.77M471.04 407V389.36M472.22 407V389.74M473.4 407V393.86M474.58 407V397.47M475.75 407V397.7M476.93 407V396.14M478.11 407V395.88M479.29 407V392.47M480.46 407V390.85M481.64 407V393.65M482.82 407V394.5M484 407V392.1M485.18 407V391.34M486.35 407V390.9M487.53 407V384.39M488.71 407V391.34M489.89 407V389.6M491.06 407V391.34M492.24 407V388.28M493.42 407V387.97M494.6 407V378.35M495.77 407V381.22M496.95 407V380.4M498.13 407V389.48M499.31 407V392.75M500.48 407V394.21M501.66 407V391.34M502.84 407V389.6M504.02 407V391.69M505.19 407V390.14M506.37 407V388.17M507.55 407V386.38M508.73 407V382.34M509.9 407V379.6M511.08 407V386.36M512.26 407V388.03M513.44 407V390.86M514.62 407V387.1M515.79 407V389.09M516.97 407V386.72M518.15 407V387.27M519.33 407V388.92M520.5 407V378.48M521.68 407V378.84M522.86 407V386.55M524.04 407V384.59M525.21 407V382.1M526.39 407V392.22M527.57 407V391.38M528.75 407V396.4M529.92 407V399.77M531.1 407V400M532.28 407V400.84M533.46 407V400.07M534.63 407V400.21M535.81 407V400.81M536.99 407V401.17M538.17 407V401.25M539.34 407V399.54M540.52 407V400.28M541.7 407V400.47M542.88 407V400.19M544.06 407V400.23M545.23 407V400.03M546.41 407V400.82M547.59 407V400M548.77 407V398.68M549.94 407V399.56M551.12 407V400.41M552.3 407V400.48M553.48 407V399.87M554.65 407V398.99M555.83 407V397.45M557.01 407V398.05M558.19 407V397.26M559.36 407V398.4M560.54 407V399.23M561.72 407V399M562.9 407V397.12M564.07 407V397.96M565.25 407V398.16M566.43 407V398.08M567.61 407V396.37M568.78 407V396.38M569.96 407V395.56M571.14 407V396.58M572.32 407V392.17M573.5 407V393.86M574.67 407V390.55M575.85 407V388.24M577.03 407V384.6M578.21 407V386.84M579.38 407V391.44M580.56 407V393.05M581.74 407V393.41M582.92 407V395.95M584.09 407V397.52M585.27 407V397.45M586.45 407V394.73M587.63 407V394.9M588.8 407V385.72M589.98 407V383.35M591.16 407V385.72M592.34 407V387.93M593.51 407V391.51M594.69 407V389.69M595.87 407V384.39M597.05 407V390.1M598.22 407V387.83M599.4 407V389.09M600.58 407V387.1M601.76 407V391.17M602.94 407V386.84M604.11 407V388.73M605.29 407V388.37M606.47 407V384.86M607.65 407V380.85M608.82 407V383.47M610 407V384.95M611.18 407V384.7M612.36 407V385.66M613.53 407V386.07M614.71 407V385.85M615.89 407V387.97M617.07 407V391.78M618.24 407V389.93M619.42 407V393.18M620.6 407V393.48M621.78 407V394.07M622.95 407V390.52M624.13 407V390.22M625.31 407V388.35M626.49 407V390.06M627.66 407V388.3M628.84 407V387.59M630.02 407V390.14M631.2 407V389.25M632.38 407V387.85M633.55 407V387.91M634.73 407V388.95M635.91 407V383.35M637.09 407V385.72M638.26 407V387.86M639.44 407V389.62M640.62 407V389.5M641.8 407V393.96M642.97 407V393.39M644.15 407V393.59M645.33 407V392.1M646.51 407V397.48M647.68 407V396.51M648.86 407V396.25M650.04 407V397.18M651.22 407V396.77M652.39 407V395.93M653.57 407V399.36M654.75 407V399.2M655.93 407V398.26M657.1 407V395.96M658.28 407V393.62M659.46 407V392.83M660.64 407V392.58M661.82 407V387.96M662.99 407V387.7M664.17 407V384.59M665.35 407V382.1M666.53 407V391.46M667.7 407V391.24M668.88 407V393.1M670.06 407V394.03M671.24 407V392.78M672.41 407V398.41M673.59 407V399.05M674.77 407V398.41M675.95 407V399.39M677.12 407V399.33M678.3 407V399.21M679.48 407V400.74M680.66 407V397.33M681.83 407V401.14M683.01 407V399.91M684.19 407V400.2M685.37 407V400.64M686.54 407V398.25M687.72 407V398.95M688.9 407V397.08M690.08 407V397.03M691.26 407V393.59M692.43 407V392.1M693.61 407V393.59M694.79 407V395.01M695.97 407V394.13M697.14 407V391.59M698.32 407V393.74M699.5 407V394.55M700.68 407V394.39M701.85 407V392.39M703.03 407V389.61M704.21 407V386.84M705.39 407V384.6M706.56 407V389.91M707.74 407V390.32M708.92 407V391.12M710.1 407V391.96M711.27 407V393.59M712.45 407V392.1M713.63 407V393.59M714.81 407V392.53M715.98 407V391.1M717.16 407V388.05M718.34 407V390.45M719.52 407V385.77M720.7 407V379.6M721.87 407V382.34M723.05 407V383.98M724.23 407V390.17M725.41 407V392.62M726.58 407V394.81M727.76 407V396.36M728.94 407V397.68M730.12 407V400.13M731.29 407V401.36M732.47 407V401.03M733.65 407V401.74M734.83 407V401.22M736 407V399.81M737.18 407V400.41M738.36 407V398.11M739.54 407V401.58M740.71 407V400.56M741.89 407V400.73M743.07 407V400.45M744.25 407V401.37M745.42 407V401.77M746.6 407V401.35M747.78 407V400.67M748.96 407V400.14M750.14 407V400.54M751.31 407V400.98M752.49 407V401.31M753.67 407V399.96M754.85 407V400.89M756.02 407V400.21M757.2 407V400.64M758.38 407V399.68M759.56 407V399.52M760.73 407V400.26M761.91 407V399.99M763.09 407V399.77M764.27 407V397.81M765.44 407V399.55M766.62 407V399.46M767.8 407V399.57M768.98 407V400.23M770.15 407V400.65M771.33 407V400.79M772.51 407V400.47M773.69 407V401.14M774.86 407V401.2M776.04 407V400.36M777.22 407V399.8M778.4 407V399.44M779.58 407V398.31M780.75 407V397.09M781.93 407V396.1M783.11 407V391.87M784.29 407V396.84M785.46 407V395.24M786.64 407V394.11M787.82 407V393.24M789 407V389.09M790.17 407V387.1M791.35 407V393.63M792.53 407V390.49M793.71 407V388.15M794.88 407V390.48M796.06 407V391.69M797.24 407V387.99M798.42 407V391.15M799.59 407V390.54M800.77 407V392.24M801.95 407V389.83M803.13 407V388.79M804.3 407V387.97M805.48 407V385.85M806.66 407V389.58M807.84 407V391.21M809.02 407V390.47M810.19 407V394.51M811.37 407V396.96M812.55 407V397.94M813.73 407V398.16M814.9 407V399.13M816.08 407V399.72M817.26 407V399.65M818.44 407V398.88M819.61 407V399.25M820.79 407V398.54M821.97 407V398.23M823.15 407V397.33M824.32 407V393.59M825.5 407V392.1M826.68 407V392.75M827.86 407V386.9M829.03 407V390.76M830.21 407V389.83M831.39 407V390.16M832.57 407V386.84M833.74 407V384.6M834.92 407V386.84M836.1 407V392.41M837.28 407V392.37M838.46 407V393.72M839.63 407V394.96M840.81 407V393.92M841.99 407V395.48M843.17 407V396.44M844.34 407V398.88M845.52 407V397.38M846.7 407V397.19M847.88 407V394.78M849.05 407V395.33M850.23 407V394.97M851.41 407V395.36M852.59 407V392.9M853.76 407V393.62M854.94 407V391.34M856.12 407V392.52M857.3 407V389.99M858.47 407V391.44M859.65 407V390.05M860.83 407V385.85M862.01 407V387.97M863.18 407V391.39M864.36 407V393.65M865.54 407V397.3M866.72 407V397.1M867.9 407V398.37M869.07 407V399.55M870.25 407V400.6M871.43 407V400.48M872.61 407V401.92M873.78 407V402.3M874.96 407V402.9M876.14 407V402.94M877.32 407V403.01M878.49 407V403.67M879.67 407V402.82M880.85 407V402.58M882.03 407V402.24M883.2 407V402.16M884.38 407V401.85M885.56 407V401.62M886.74 407V401.11M887.91 407V400.91M889.09 407V401.12M890.27 407V401.25M891.45 407V400.5M892.62 407V398.65M893.8 407V398.46M894.98 407V398.75M896.16 407V399.36M897.34 407V399.83M898.51 407V399.32M899.69 407V396.72M900.87 407V397.17M902.05 407V394.88M903.22 407V396.38M904.4 407V393.59M905.58 407V392.1M906.76 407V394.31M907.93 407V394.3M909.11 407V395.33M910.29 407V394.15M911.47 407V396.22M912.64 407V393.86M913.82 407V396.89M915 407V396.71M916.18 407V393.87M917.35 407V390.43M918.53 407V381.22M919.71 407V378.35M920.89 407V385.27M922.06 407V388.11M923.24 407V391.41M924.42 407V389.6M925.6 407V391.34M926.78 407V399.7M927.95 407V403.31M929.13 407V402.78M930.31 407V401.33M931.49 407V401.65M932.66 407V400.53M933.84 407V399.74M935.02 407V397.81M936.2 407V398.7M937.37 407V399.4M938.55 407V396.48M939.73 407V396.94M940.91 407V397.12M942.08 407V398.87M943.26 407V397.45M944.44 407V397.27M945.62 407V396.45M946.79 407V396.75M947.97 407V397.32M949.15 407V393.54M950.33 407V393.24M951.5 407V394.39M952.68 407V395.21M953.86 407V393.87M955.04 407V393.5M956.22 407V391.34M957.39 407V389.6M958.57 407V391.34M959.75 407V395.36M960.93 407V395.5M962.1 407V396.37M963.28 407V396.87M964.46 407V398.36M965.64 407V399.51M966.81 407V399.03M967.99 407V397.5M969.17 407V399.41M970.35 407V398.71M971.52 407V398.81M972.7 407V399.55M973.88 407V394.82M975.06 407V397.96M976.23 407V399.72M977.41 407V400.56M978.59 407V399.72M979.77 407V398.49M980.94 407V391.37M982.12 407V393.8M983.3 407V391.66M984.48 407V390.16M985.66 407V386.84M986.83 407V384.6M988.01 407V393.21M989.19 407V392.27M990.37 407V388.81M991.54 407V396.18M992.72 407V396.28M993.9 407V395.12M995.08 407V395.56M996.25 407V396.18M997.43 407V394.33M998.61 407V392.63M999.79 407V392.15M1000.96 407V390.7M1002.14 407V392.14M1003.32 407V382.1M1004.5 407V384.59M1005.67 407V390.82M1006.85 407V389.47M1008.03 407V389.46M1009.21 407V392.67M1010.38 407V394.77M1011.56 407V393.59M1012.74 407V392.1M1013.92 407V394.59M1015.1 407V396.64M1016.27 407V395.79M1017.45 407V395.13M1018.63 407V395.71M1019.81 407V395.07M1020.98 407V398.23M1022.16 407V398.02M1023.34 407V397.24M1024.52 407V397.03M1025.69 407V394.37M1026.87 407V392.9M1028.05 407V388.53M1029.23 407V389.39M1030.4 407V383.47M1031.58 407V380.85M1032.76 407V385.27M1033.94 407V391.63M1035.11 407V389.72M1036.29 407V388.76M1037.47 407V391.78M1038.65 407V392.99M1039.82 407V389.6M1041 407V391.34M1042.18 407V394.24M1043.36 407V393.52M1044.54 407V396.48M1045.71 407V397.46M1046.89 407V396.52M1048.07 407V396.39M1049.25 407V397.17M1050.42 407V397.74M1051.6 407V398M1052.78 407V398.07M1053.96 407V397.57M1055.13 407V394.75M1056.31 407V393.46M1057.49 407V389.17M1058.67 407V379.21M1059.84 407V380.85M1061.02 407V383.47M1062.2 407V388.26M1063.38 407V391.96M1064.55 407V392.95M1065.73 407V393.96M1066.91 407V395.55M1068.09 407V395.64M1069.26 407V395.61M1070.44 407V394.78M1071.62 407V396.65M1072.8 407V396.6M1073.98 407V394.76M1075.15 407V397.12M1076.33 407V396.28M1077.51 407V395.03M1078.69 407V395.79M1079.86 407V392.1M1081.04 407V393.59M1082.22 407V392.46M1083.4 407V391.78M1084.57 407V390.47M1085.75 407V388.42M1086.93 407V382.1M1088.11 407V384.59M1089.28 407V391.15M1090.46 407V388.11M1091.64 407V393.32M1092.82 407V395.57M1093.99 407V395.12M1095.17 407V395.84M1096.35 407V396.86M1097.53 407V399.39M1098.7 407V400.14M1099.88 407V399.27M1101.06 407V398.49M1102.24 407V399.47M1103.42 407V399.8M1104.59 407V398.96M1105.77 407V397.73M1106.95 407V396.93M1108.13 407V396.85M1109.3 407V388.94M1110.48 407V392.55M1111.66 407V389.31M1112.84 407V387.08M1114.01 407V389.07M1115.19 407V381.22M1116.37 407V378.35M1117.55 407V387.31M1118.72 407V390.51M1119.9 407V391.55M1121.08 407V390.19M1122.26 407V392.1M1123.43 407V393.59M1124.61 407V402.31M1125.79 407V403.19M1126.97 407V402.35M1128.14 407V402.79M1129.32 407V402.44M1130.5 407V403.23M1131.68 407V402.82M1132.86 407V402.65M1134.03 407V402.26M1135.21 407V402.58M1136.39 407V401.9M1137.57 407V401.83M1138.74 407V401.87" stroke="#238c23" stroke-width="0.98" fill="none"/><path d="M247.3 142.5V165M248.48 153.49V160.16M249.66 155.52V160.95M250.83 154.74V164.26M252.01 157.5V167.5M253.19 162.45V165.73M254.37 158.1V162.76M255.54 157.66V162.81M256.72 154.75V161.66M257.9 154.59V159.72M259.08 153.64V160.18M260.25 150V162.5M261.43 153.57V159.23M262.61 146.75V157.4M263.79 142.5V162.5M264.96 157.89V166M266.14 162.98V174.37M267.32 170V185M268.5 171.11V181.6M269.67 165.78V174.13M270.85 157.5V175M272.03 158.32V165.52M273.21 161.57V167.45M274.38 157.44V169.5M275.56 152.5V170M276.74 164.75V175.11M277.92 168.68V178.08M279.1 165V200M280.27 185.58V203.05M281.45 198.36V214.11M282.63 202.5V222.5M283.81 207.62V218.82M284.98 208.66V216.97M286.16 209.23V217.37M287.34 210.8V217.74M288.52 214.44V226.39M289.69 215V230M290.87 221.96V228.02M292.05 217.48V227.24M293.23 219.21V231.24M294.4 221.39V232.89M295.58 218.51V235.58M296.76 220.49V236.97M297.94 219.37V233.41M299.11 212.5V240M300.29 211.33V225.7M301.47 185V215M302.65 178.8V190.84M303.82 132.5V165M305 148.6V166.42M306.18 163.56V176.33M307.36 147.5V187.5M308.54 165.78V180.94M309.71 156.25V177.24M310.89 155.21V172.24M312.07 155V172.5M313.25 160.05V166.3M314.42 157.55V170.02M315.6 158.32V165.42M316.78 157.41V165.75M317.96 157.93V167.47M319.13 158.79V167.87M320.31 158.5V163.54M321.49 159.67V168.81M322.67 156V172.5M323.84 166.19V184.8M325.02 160V237.5M326.2 181.78V223.6M327.38 198.48V223.97M328.55 212.5V232.5M329.73 218.22V229.98M330.91 216.15V229.25M332.09 219.26V224.93M333.26 216.44V227.69M334.44 214.87V225.28M335.62 215.72V222.93M336.8 215.68V222.52M337.98 218.29V221.93M339.15 215.61V221.85M340.33 213.75V223.75M341.51 215.07V218.25M342.69 213.39V220.49M343.86 214.9V220.47M345.04 214.96V219.88M346.22 216.15V219.53M347.4 210V220M348.57 216.9V221.26M349.75 215.59V219.6M350.93 214.89V222.04M352.11 217.18V220.74M353.28 218.99V223.58M354.46 217.5V230M355.64 221.75V227.67M356.82 218.81V227.09M357.99 219.63V223.56M359.17 218.02V222.5M360.35 218.84V223.89M361.53 216.6V222.45M362.7 217.35V222.08M363.88 214.83V220.2M365.06 213.75V225M366.24 214.26V219.5M367.42 214.88V220.85M368.59 216.34V223.48M369.77 216.31V222.53M370.95 218.4V224M372.13 218.94V223.84M373.3 218.46V224.75M374.48 217.5V226M375.66 220.97V231.88M376.84 228.85V246.19M378.01 225V262.5M379.19 239.85V257.51M380.37 246.07V258.81M381.55 240.26V258.02M382.72 243.4V258.78M383.9 244.75V253.01M385.08 245V265M386.26 249.31V260.76M387.43 253.77V262.96M388.61 254.58V267.24M389.79 256.59V264.78M390.97 260V275M392.14 254.81V267.85M393.32 249.12V265.08M394.5 237.5V265M395.68 244.52V258.15M396.86 242.04V252.57M398.03 244.45V251.08M399.21 238.04V250.41M400.39 232.19V245.53M401.57 232.09V237.13M402.74 226V240M403.92 230.31V235.58M405.1 230.5V238.31M406.28 233.61V237.83M407.45 232.59V238.08M408.63 227.5V240M409.81 240.65V282.33M410.99 230V315M412.16 283.68V318.28M413.34 300.67V334.01M414.52 317.5V352.5M415.7 323.53V347.37M416.87 323.75V337.05M418.05 322.75V341.45M419.23 325.92V337.27M420.41 320V342.5M421.58 325.64V341.63M422.76 327.96V337.74M423.94 326.23V343.95M425.12 325V350M426.3 327.38V341.23M427.47 324.64V341.02M428.65 320.2V332.64M429.83 312.5V335M431.01 315.5V323.61M432.18 304.06V324.8M433.36 301.06V312.72M434.54 287.5V325M435.72 292.5V308.83M436.89 285.22V300.08M438.07 279.9V296.78M439.25 273.75V295M440.43 281.91V290.85M441.6 281.22V289.47M442.78 277.85V286.54M443.96 280.01V291.81M445.14 279.28V291.36M446.31 277.5V295M447.49 281.04V288.44M448.67 280.58V289.85M449.85 280.38V287.04M451.02 283.32V299.29M452.2 282.5V305M453.38 293.23V304.09M454.56 294.67V304.84M455.74 300V325M456.91 301.99V313.26M458.09 306.85V318.49M459.27 312.16V320.9M460.45 306.02V320.42M461.62 303.69V318.47M462.8 302.5V322.5M463.98 282.85V305.14M465.16 246.2V297.31M466.33 217.5V322M467.51 280.81V307.6M468.69 281.16V331.61M469.87 300V350M471.04 313.62V340.46M472.22 322.5V350M473.4 325.14V341.6M474.58 325.79V333.13M475.75 326.42V339.93M476.93 322.5V337.5M478.11 326.17V332.45M479.29 322.21V332.12M480.46 320.93V331.34M481.64 319.46V328.03M482.82 315.11V322.21M484 307.5V327.5M485.18 306.53V319.42M486.35 304.59V317.27M487.53 303.37V309.91M488.71 303.12V313.25M489.89 295V312.5M491.06 289.42V305.77M492.24 263.08V291.07M493.42 240V300M494.6 266.21V290.58M495.77 275V332.5M496.95 290.41V321.54M498.13 313.08V335.61M499.31 327.1V345.32M500.48 330V355M501.66 336.53V346.91M502.84 335.44V348.06M504.02 341.77V351.88M505.19 335.96V350.67M506.37 335V355M507.55 319.47V338.51M508.73 320.57V336.92M509.9 287.5V350M511.08 293.36V322.52M512.26 287.7V321.46M513.44 275V310M514.62 286.92V297.36M515.79 278.01V298.13M516.97 283.65V293.52M518.15 278.02V286.35M519.33 274.58V281.64M520.5 272.5V287.5M521.68 269.21V279.25M522.86 257.33V275.85M524.04 242.5V287.5M525.21 266.64V288.06M526.39 277.52V294.13M527.57 270V310M528.75 273.79V287.96M529.92 270.51V282.87M531.1 270V282.5M532.28 270.01V279.1M533.46 270.73V279.06M534.63 270.93V279.83M535.81 269.9V275.62M536.99 267.87V276.21M538.17 267.36V272.59M539.34 266.23V270.89M540.52 265V277.5M541.7 267.19V274.97M542.88 267.73V277.35M544.06 268.17V277.61M545.23 268.42V277.99M546.41 267.5V277.79M547.59 269.48V279.01M548.77 268.87V278.36M549.94 268V285M551.12 268.1V272.95M552.3 268.44V276.97M553.48 270.37V275.49M554.65 268.8V276.6M555.83 269.4V273.17M557.01 270.75V276.44M558.19 273.69V277.03M559.36 269.8V275.99M560.54 269.67V273.01M561.72 271.42V274.3M562.9 269V276M564.07 271.77V278.46M565.25 272.5V284M566.43 273.13V276.31M567.61 273.67V279.12M568.78 274.1V278.15M569.96 272.13V276.54M571.14 271V276M572.32 264.29V272.23M573.5 252.5V272.5M574.67 262.44V273.92M575.85 262.33V278.36M577.03 260V290M578.21 264.48V281.07M579.38 262.34V271.47M580.56 261.02V268.63M581.74 266.66V273.76M582.92 265.48V278.92M584.09 271.81V277.67M585.27 262.5V277.5M586.45 267.76V277.94M587.63 270.57V278.17M588.8 268.62V275.22M589.98 261.47V275.96M591.16 258.7V277.24M592.34 255V282.5M593.51 261.28V272.85M594.69 262.7V270.51M595.87 251.65V264.78M597.05 245V262M598.22 247.34V255.3M599.4 240.92V254.07M600.58 237.3V248.88M601.76 232.62V245.42M602.94 230V250M604.11 229.7V236.02M605.29 217.5V235M606.47 222.3V236.07M607.65 226.95V239.06M608.82 225V250M610 236.02V246.19M611.18 237.61V252.46M612.36 240V272.5M613.53 245.18V258.21M614.71 255.55V265.52M615.89 254.73V265.47M617.07 255V275M618.24 255.79V270.82M619.42 258.97V272.37M620.6 258.17V266.84M621.78 255V277.5M622.95 265.07V275.82M624.13 269.86V279.6M625.31 275.76V285.26M626.49 275.06V286.5M627.66 275V292.5M628.84 280.85V290.14M630.02 281.97V297.01M631.2 282.69V298.55M632.38 280.58V298.72M633.55 293.59V304.26M634.73 277.5V315M635.91 292.21V304.07M637.09 285.4V304.21M638.26 286.8V299.44M639.44 280V300M640.62 289.46V298.57M641.8 284.3V293.77M642.97 284.08V291.7M644.15 287.17V297.17M645.33 289.39V298.07M646.51 288.62V299.06M647.68 282.5V300M648.86 290.44V301.82M650.04 290.16V301.41M651.22 293.79V300.52M652.39 297.72V304.49M653.57 297.87V306.96M654.75 297.5V312.5M655.93 301.09V311.29M657.1 299.8V304.8M658.28 296.78V303.04M659.46 294.87V307.57M660.64 295.92V308.15M661.82 300.57V308.17M662.99 292.5V312.5M664.17 298.27V308.34M665.35 296.11V302.33M666.53 291.82V300.15M667.7 289.2V299.24M668.88 291.68V298.07M670.06 287.5V300M671.24 289.63V297.22M672.41 289.55V296.02M673.59 289.86V295.51M674.77 287.66V295.74M675.95 286.9V295.3M677.12 287.88V293.16M678.3 288.32V293.93M679.48 282.5V295M680.66 285.68V294.57M681.83 285.66V290.72M683.01 285.84V295.42M684.19 288V295.9M685.37 287.21V296.4M686.54 287.76V298.2M687.72 285V300M688.9 283.33V291.02M690.08 283.35V288.64M691.26 273.77V279.73M692.43 265V282.5M693.61 274.43V283.2M694.79 275.96V288.93M695.97 284.07V290.99M697.14 280V297.5M698.32 283.77V295.76M699.5 285.7V296.48M700.68 289.1V300.65M701.85 294.04V302.48M703.03 299.37V304.38M704.21 292.5V308.75M705.39 287.87V296.9M706.56 262.5V295M707.74 265.23V282.39M708.92 264.75V278.33M710.1 254.09V272.32M711.27 252.97V267.66M712.45 240V265M713.63 250.9V265.75M714.81 251.98V267.58M715.98 258.47V268.9M717.16 261.13V270.22M718.34 252V272M719.52 257.37V284.49M720.7 250V316M721.87 283.1V302.36M723.05 297.46V310.21M724.23 295V312.5M725.41 293.98V303.38M726.58 289.29V299.25M727.76 285V300M728.94 287.37V297.42M730.12 290.31V295.58M731.29 288.64V295.9M732.47 286.97V296.34M733.65 290.62V295.04M734.83 288.58V292.15M736 289.86V294.35M737.18 289.95V296.74M738.36 290.37V294.02M739.54 288.75V297.5M740.71 292.75V295.6M741.89 293.16V296.72M743.07 292.18V296.2M744.25 293.32V296.65M745.42 290.61V296.42M746.6 291.23V296.01M747.78 290V295.76M748.96 292.49V295.22M750.14 291.16V294.07M751.31 288.44V293.19M752.49 287.5V295M753.67 289.57V292.44M754.85 287.96V292.78M756.02 286.35V291.4M757.2 285.78V290.76M758.38 285V288.5M759.56 280V290M760.73 285.25V288.76M761.91 284.74V288.69M763.09 282.44V287.08M764.27 281.16V285.46M765.44 280.51V287.92M766.62 280.63V283.64M767.8 280.67V287.77M768.98 280.48V286.95M770.15 280V290M771.33 280.36V284.29M772.51 281.2V285.11M773.69 282.4V285.65M774.86 281.82V287.03M776.04 277.5V287.5M777.22 283.01V287.82M778.4 280.81V286.53M779.58 281.85V289.26M780.75 282.42V289.76M781.93 283.94V290.25M783.11 287.98V292.9M784.29 282.5V295M785.46 286.23V290.82M786.64 281.99V288.98M787.82 279.67V283.53M789 278.51V282.94M790.17 275V285M791.35 262.98V274.27M792.53 218.75V275M793.71 229.68V265.02M794.88 241.11V261.59M796.06 238.62V264.04M797.24 230V260M798.42 258.15V271.46M799.59 250V285M800.77 275.8V284.33M801.95 275V292.5M803.13 280.27V292.84M804.3 284.83V292.78M805.48 280.98V291.8M806.66 282.23V292.54M807.84 285.79V293.5M809.02 277.5V300M810.19 286.43V293.41M811.37 288.9V295.97M812.55 290V305M813.73 291.72V300.51M814.9 293.82V299.72M816.08 294.09V301.2M817.26 294.33V300.84M818.44 294.76V301.91M819.61 295V305M820.79 294.25V301.31M821.97 294.57V299.36M823.15 289.97V300.01M824.32 287.65V298.07M825.5 282.5V300M826.68 281.57V293.42M827.86 280.81V289.87M829.03 275.63V285.73M830.21 270V285M831.39 266.94V276.22M832.57 261.38V271.76M833.74 258.95V273.21M834.92 243.75V275M836.1 255.98V272.14M837.28 259.13V276.82M838.46 272.18V279.33M839.63 262.5V282.5M840.81 271.32V281.69M841.99 267.69V278.29M843.17 268.96V275.12M844.34 264.31V276.22M845.52 263.35V275.56M846.7 263.4V270.29M847.88 260V275M849.05 261.93V273.11M850.23 262.16V270.11M851.41 262.25V270.82M852.59 260V267.28M853.76 258.01V264.56M854.94 257.5V272.5M856.12 256.24V264.44M857.3 255.74V260.24M858.47 252.78V257.12M859.65 250V260M860.83 250V255.34M862.01 250V282.5M863.18 254.17V267.13M864.36 262.93V277.02M865.54 270.83V289.29M866.72 276.34V292.45M867.9 285V303.75M869.07 289.57V299.14M870.25 290.92V297.97M871.43 290.74V297.7M872.61 290.95V297.98M873.78 286.52V294.06M874.96 280V295M876.14 285.08V290.62M877.32 283.92V291.47M878.49 284.78V290.18M879.67 286.26V292.13M880.85 287.5V295M882.03 287.89V290.74M883.2 286.76V290.78M884.38 287.35V290.65M885.56 285.57V290.29M886.74 283.84V287.44M887.91 282.85V286.8M889.09 279.93V283.87M890.27 275V287.5M891.45 276.58V284.92M892.62 276.11V280.23M893.8 272.6V280.62M894.98 270.86V278.87M896.16 270.41V279.12M897.34 268.59V274.85M898.51 268.95V274.52M899.69 262.5V277.5M900.87 265.63V270.14M902.05 260.59V270.86M903.22 258.67V268.51M904.4 259.86V269.42M905.58 260.59V267.75M906.76 255.3V266.19M907.93 255.29V265.39M909.11 256.15V263.55M910.29 250V265M911.47 255.91V262.98M912.64 254.01V261.65M913.82 249.46V258.29M915 246.8V255.65M916.18 245.36V255.46M917.35 240V265M918.53 238V255.05M919.71 222.88V245.83M920.89 202.5V250M922.06 214.55V230.65M923.24 221.49V237.32M924.42 222.5V240M925.6 226.6V234.63M926.78 226.09V236.92M927.95 227.83V233.64M929.13 226.37V231.33M930.31 223.65V233.14M931.49 219.08V229.23M932.66 218.53V228.95M933.84 215V230M935.02 219.17V230.09M936.2 221.62V233.38M937.37 225.2V237.66M938.55 225V245M939.73 227.69V238.45M940.91 226.21V239.57M942.08 225.5V236.22M943.26 228.16V236.09M944.44 227.27V234.11M945.62 229.72V235M946.79 227.02V232.1M947.97 222.5V235M949.15 222.26V232.22M950.33 221.79V230.05M951.5 218.56V227.53M952.68 214.75V220.9M953.86 214.06V221.89M955.04 207.5V225M956.22 206.07V213.64M957.39 201.44V215.37M958.57 185V215M959.75 194.99V206.39M960.93 194.21V202.9M962.1 191.09V198.4M963.28 187.65V199.9M964.46 182.5V197.5M965.64 184.35V195.18M966.81 189.62V194.31M967.99 189.77V195.32M969.17 190.03V197.92M970.35 193.76V198.72M971.52 190.47V199.08M972.7 187.5V200M973.88 194.8V199.17M975.06 193.96V201.71M976.23 195.5V202.8M977.41 198.56V203.6M978.59 197.25V202.1M979.77 192.5V206M980.94 192.25V198.72M982.12 182.28V190.93M983.3 178.06V188.34M984.48 162.5V197.5M985.66 158.61V173.71M986.83 153.5V171.21M988.01 140V170M989.19 151.34V159.4M990.37 148.43V166.48M991.54 152.01V161.28M992.72 150V170M993.9 149.79V160.84M995.08 151.26V162.97M996.25 151.24V165.69M997.43 153.85V164.43M998.61 153.71V160.25M999.79 145V165M1000.96 143.29V152.73M1002.14 136.36V147.09M1003.32 122.5V145M1004.5 123.29V130.87M1005.67 118.39V135.52M1006.85 114.11V123.42M1008.03 114.09V126.52M1009.21 115.18V126.21M1010.38 101V127.5M1011.56 116.18V125.3M1012.74 112.6V124.14M1013.92 114.92V127.75M1015.1 115V130M1016.27 119.37V127.69M1017.45 120.5V127.52M1018.63 124.33V131.58M1019.81 126.99V134.37M1020.98 129.5V134.62M1022.16 126.73V136.55M1023.34 127.5V145M1024.52 126.2V138.65M1025.69 125.68V137.88M1026.87 122.53V136.36M1028.05 121.38V139.2M1029.23 128.98V138.29M1030.4 120.24V136.72M1031.58 111V140M1032.76 141.72V153.13M1033.94 146.52V166.9M1035.11 155.26V170.68M1036.29 152.5V195M1037.47 156.61V177.84M1038.65 148.56V165.98M1039.82 127.5V165M1041 148.05V159.41M1042.18 140.66V157.81M1043.36 148.94V159.94M1044.54 147.5V170M1045.71 155V164.4M1046.89 150.26V164.18M1048.07 155.38V163.42M1049.25 151.5V162.07M1050.42 156.14V162.45M1051.6 150V165M1052.78 163.98V170.49M1053.96 162.58V173.23M1055.13 165V180M1056.31 169.4V182.43M1057.49 171.19V179.8M1058.67 176.38V186.15M1059.84 175V202.5M1061.02 176.4V196.34M1062.2 181.28V190.61M1063.38 179.51V195.29M1064.55 181.56V198.74M1065.73 186.27V200.86M1066.91 186.28V193.41M1068.09 187.42V193.95M1069.26 187.61V200.16M1070.44 185V205M1071.62 196.12V205.29M1072.8 203.6V209.31M1073.98 201.18V209.83M1075.15 201.04V212.75M1076.33 197.5V215M1077.51 205.15V221.14M1078.69 211.9V226.41M1079.86 210V240M1081.04 218.68V237.05M1082.22 221.34V237.33M1083.4 225.98V236.64M1084.57 224.15V240.03M1085.75 223.36V240.76M1086.93 225V247.5M1088.11 221.81V236.39M1089.28 210.69V222.88M1090.46 200V220M1091.64 201.34V207.87M1092.82 190V207.5M1093.99 195.48V201.42M1095.17 192.45V201.47M1096.35 193.25V201.39M1097.53 190.89V199.14M1098.7 187.8V194.46M1099.88 185V202.5M1101.06 188.86V200.3M1102.24 193.04V200.38M1103.42 196.01V202.4M1104.59 195.91V202.46M1105.77 195V207.5M1106.95 204.3V212.09M1108.13 211.41V224.82M1109.3 207.5V237.5M1110.48 217.78V229.02M1111.66 214.99V224.73M1112.84 210V225M1114.01 203.59V218.49M1115.19 195.05V206.77M1116.37 194.93V207.25M1117.55 176V215M1118.72 199.47V213.02M1119.9 190V233.75M1121.08 202V217.78M1122.26 203.86V222.89M1123.43 212.5V226M1124.61 215.01V222.08M1125.79 213.04V221.28M1126.97 212.89V216.47M1128.14 212.26V217.97M1129.32 213.17V218.27M1130.5 210V218.75M1131.68 211.28V216.69M1132.86 212.09V216.05M1134.03 210.84V214.54M1135.21 210.18V214.22M1136.39 211.48V215.01M1137.57 210.58V214.9M1138.74 210V216" stroke="#00f000" stroke-width="0.7" fill="none"/><path d="M246.7 211.2H1140.6" stroke="#707a88" stroke-width="0.9"/><path d="M246.6 407.4V95.3H1140.6V407.4Z" stroke="#b4b4b4" stroke-width="0.9" fill="none"/><path d="M1140.6 105.6h2.2M1140.6 124.44h2.2M1140.6 143.28h2.2M1140.6 162.12h2.2M1140.6 180.96h2.2M1140.6 199.8h2.2M1140.6 218.64h2.2M1140.6 237.48h2.2M1140.6 256.32h2.2M1140.6 275.16h2.2M1140.6 294h2.2M1140.6 312.84h2.2M1140.6 331.68h2.2M1140.6 350.52h2.2M1140.6 369.36h2.2M1140.6 388.2h2.2M246.7 407.4v2M284.38 407.4v2M322.06 407.4v2M359.74 407.4v2M397.42 407.4v2M435.1 407.4v2M472.78 407.4v2M510.46 407.4v2M548.14 407.4v2M585.82 407.4v2M623.5 407.4v2M661.18 407.4v2M698.86 407.4v2M736.54 407.4v2M774.22 407.4v2M811.9 407.4v2M849.58 407.4v2M887.26 407.4v2M924.94 407.4v2M962.62 407.4v2M1000.3 407.4v2M1037.98 407.4v2M1075.66 407.4v2M1113.34 407.4v2" stroke="#c8c8c8" stroke-width="0.8" fill="none"/><path d="M280 184.25L280.75 202.5" stroke="#2a62c0" stroke-width="0.75" stroke-dasharray="1.6 1.4" fill="none" opacity="0.85"/><path d="M432.5 298.5L432.5 316.25" stroke="#2a62c0" stroke-width="0.75" stroke-dasharray="1.6 1.4" fill="none" opacity="0.85"/><path d="M465.75 255L465.75 276.5" stroke="#2a62c0" stroke-width="0.75" stroke-dasharray="1.6 1.4" fill="none" opacity="0.85"/><path d="M493 277.25L493 294.5" stroke="#2a62c0" stroke-width="0.75" stroke-dasharray="1.6 1.4" fill="none" opacity="0.85"/><path d="M514.25 275L514.25 292.5" stroke="#2a62c0" stroke-width="0.75" stroke-dasharray="1.6 1.4" fill="none" opacity="0.85"/><path d="M792.5 228L792 240" stroke="#2a62c0" stroke-width="0.75" stroke-dasharray="1.6 1.4" fill="none" opacity="0.85"/><path d="M802.5 293.5L802.5 309.5" stroke="#2a62c0" stroke-width="0.75" stroke-dasharray="1.6 1.4" fill="none" opacity="0.85"/><path d="M833 259.75L833 277.5" stroke="#2a62c0" stroke-width="0.75" stroke-dasharray="1.6 1.4" fill="none" opacity="0.85"/><path d="M1033.25 143.75L1033.25 161.5" stroke="#2a62c0" stroke-width="0.75" stroke-dasharray="1.6 1.4" fill="none" opacity="0.85"/><path d="M1077.5 211.75L1078 230.75" stroke="#2a62c0" stroke-width="0.75" stroke-dasharray="1.6 1.4" fill="none" opacity="0.85"/><path d="M275.3 109.8V143" stroke="#10a040" stroke-width="0.7" stroke-dasharray="1.5 0.9" fill="none"/><path d="M275 125l3.9 -3.3h-1.9v-2.4h-4v2.4h-1.9z" fill="#ee4a22" stroke="#ffeee6" stroke-width="0.85" stroke-linejoin="round"/><path d="M274.5 143.25l3.9 3.3h-1.9v2.4h-4v-2.4h-1.9z" fill="#1c6bd0" stroke="#e4eeff" stroke-width="0.85" stroke-linejoin="round"/><path d="M274 154.25l3.9 -3.3h-1.9v-2.4h-4v2.4h-1.9z" fill="#ee4a22" stroke="#ffeee6" stroke-width="0.85" stroke-linejoin="round"/><path d="M264.25 173.5l3.9 -3.3h-1.9v-2.4h-4v2.4h-1.9z" fill="#ee4a22" stroke="#ffeee6" stroke-width="0.85" stroke-linejoin="round"/><path d="M270.5 167.75l3.9 3.3h-1.9v2.4h-4v-2.4h-1.9z" fill="#1c6bd0" stroke="#e4eeff" stroke-width="0.85" stroke-linejoin="round"/><path d="M267.5 178l3.9 -3.3h-1.9v-2.4h-4v2.4h-1.9z" fill="#ee4a22" stroke="#ffeee6" stroke-width="0.85" stroke-linejoin="round"/><path d="M269.25 175.75l3.9 3.3h-1.9v2.4h-4v-2.4h-1.9z" fill="#1c6bd0" stroke="#e4eeff" stroke-width="0.85" stroke-linejoin="round"/><path d="M280 184.25l3.9 -3.3h-1.9v-2.4h-4v2.4h-1.9z" fill="#ee4a22" stroke="#ffeee6" stroke-width="0.85" stroke-linejoin="round"/><path d="M280.75 202.5l3.9 3.3h-1.9v2.4h-4v-2.4h-1.9z" fill="#1c6bd0" stroke="#e4eeff" stroke-width="0.85" stroke-linejoin="round"/><path d="M302 209.5l3.9 -3.3h-1.9v-2.4h-4v2.4h-1.9z" fill="#ee4a22" stroke="#ffeee6" stroke-width="0.85" stroke-linejoin="round"/><path d="M300.75 211.25l3.9 3.3h-1.9v2.4h-4v-2.4h-1.9z" fill="#1c6bd0" stroke="#e4eeff" stroke-width="0.85" stroke-linejoin="round"/><path d="M284.25 216.75l3.9 3.3h-1.9v2.4h-4v-2.4h-1.9z" fill="#1c6bd0" stroke="#e4eeff" stroke-width="0.85" stroke-linejoin="round"/><path d="M297 214.5l3.9 3.3h-1.9v2.4h-4v-2.4h-1.9z" fill="#1c6bd0" stroke="#e4eeff" stroke-width="0.85" stroke-linejoin="round"/><path d="M297 225.5l3.9 -3.3h-1.9v-2.4h-4v2.4h-1.9z" fill="#ee4a22" stroke="#ffeee6" stroke-width="0.85" stroke-linejoin="round"/><path d="M284.5 222l3.9 3.3h-1.9v2.4h-4v-2.4h-1.9z" fill="#1c6bd0" stroke="#e4eeff" stroke-width="0.85" stroke-linejoin="round"/><path d="M297.5 228.5l3.9 3.3h-1.9v2.4h-4v-2.4h-1.9z" fill="#1c6bd0" stroke="#e4eeff" stroke-width="0.85" stroke-linejoin="round"/><path d="M283.5 237.25l3.9 -3.3h-1.9v-2.4h-4v2.4h-1.9z" fill="#ee4a22" stroke="#ffeee6" stroke-width="0.85" stroke-linejoin="round"/><path d="M296.5 240.5l3.9 -3.3h-1.9v-2.4h-4v2.4h-1.9z" fill="#ee4a22" stroke="#ffeee6" stroke-width="0.85" stroke-linejoin="round"/><path d="M283.5 236.5l3.9 3.3h-1.9v2.4h-4v-2.4h-1.9z" fill="#1c6bd0" stroke="#e4eeff" stroke-width="0.85" stroke-linejoin="round"/><path d="M296.5 240.5l3.9 3.3h-1.9v2.4h-4v-2.4h-1.9z" fill="#1c6bd0" stroke="#e4eeff" stroke-width="0.85" stroke-linejoin="round"/><path d="M403.75 227l3.9 3.3h-1.9v2.4h-4v-2.4h-1.9z" fill="#1c6bd0" stroke="#e4eeff" stroke-width="0.85" stroke-linejoin="round"/><path d="M407 238l3.9 -3.3h-1.9v-2.4h-4v2.4h-1.9z" fill="#ee4a22" stroke="#ffeee6" stroke-width="0.85" stroke-linejoin="round"/><path d="M467 227.75l3.9 3.3h-1.9v2.4h-4v-2.4h-1.9z" fill="#1c6bd0" stroke="#e4eeff" stroke-width="0.85" stroke-linejoin="round"/><path d="M467 238.5l3.9 -3.3h-1.9v-2.4h-4v2.4h-1.9z" fill="#ee4a22" stroke="#ffeee6" stroke-width="0.85" stroke-linejoin="round"/><path d="M465.75 254.25l3.9 -3.3h-1.9v-2.4h-4v2.4h-1.9z" fill="#ee4a22" stroke="#ffeee6" stroke-width="0.85" stroke-linejoin="round"/><path d="M391.5 273.25l3.9 3.3h-1.9v2.4h-4v-2.4h-1.9z" fill="#1c6bd0" stroke="#e4eeff" stroke-width="0.85" stroke-linejoin="round"/><path d="M391.5 284.75l3.9 -3.3h-1.9v-2.4h-4v2.4h-1.9z" fill="#ee4a22" stroke="#ffeee6" stroke-width="0.85" stroke-linejoin="round"/><path d="M391.5 285l3.9 3.3h-1.9v2.4h-4v-2.4h-1.9z" fill="#1c6bd0" stroke="#e4eeff" stroke-width="0.85" stroke-linejoin="round"/><path d="M410.5 276.5l3.9 3.3h-1.9v2.4h-4v-2.4h-1.9z" fill="#1c6bd0" stroke="#e4eeff" stroke-width="0.85" stroke-linejoin="round"/><path d="M410.5 288.5l3.9 -3.3h-1.9v-2.4h-4v2.4h-1.9z" fill="#ee4a22" stroke="#ffeee6" stroke-width="0.85" stroke-linejoin="round"/><path d="M410.5 289l3.9 3.3h-1.9v2.4h-4v-2.4h-1.9z" fill="#1c6bd0" stroke="#e4eeff" stroke-width="0.85" stroke-linejoin="round"/><path d="M432.5 298.5l3.9 -3.3h-1.9v-2.4h-4v2.4h-1.9z" fill="#ee4a22" stroke="#ffeee6" stroke-width="0.85" stroke-linejoin="round"/><path d="M432.5 316.25l3.9 3.3h-1.9v2.4h-4v-2.4h-1.9z" fill="#1c6bd0" stroke="#e4eeff" stroke-width="0.85" stroke-linejoin="round"/><path d="M465.75 255l3.9 -3.3h-1.9v-2.4h-4v2.4h-1.9z" fill="#ee4a22" stroke="#ffeee6" stroke-width="0.85" stroke-linejoin="round"/><path d="M465.75 276.5l3.9 3.3h-1.9v2.4h-4v-2.4h-1.9z" fill="#1c6bd0" stroke="#e4eeff" stroke-width="0.85" stroke-linejoin="round"/><path d="M465.75 282l3.9 3.3h-1.9v2.4h-4v-2.4h-1.9z" fill="#1c6bd0" stroke="#e4eeff" stroke-width="0.85" stroke-linejoin="round"/><path d="M465.75 292.25l3.9 -3.3h-1.9v-2.4h-4v2.4h-1.9z" fill="#ee4a22" stroke="#ffeee6" stroke-width="0.85" stroke-linejoin="round"/><path d="M460.75 313.25l3.9 3.3h-1.9v2.4h-4v-2.4h-1.9z" fill="#1c6bd0" stroke="#e4eeff" stroke-width="0.85" stroke-linejoin="round"/><path d="M468 313.25l3.9 3.3h-1.9v2.4h-4v-2.4h-1.9z" fill="#1c6bd0" stroke="#e4eeff" stroke-width="0.85" stroke-linejoin="round"/><path d="M460.75 323.75l3.9 -3.3h-1.9v-2.4h-4v2.4h-1.9z" fill="#ee4a22" stroke="#ffeee6" stroke-width="0.85" stroke-linejoin="round"/><path d="M468 323.75l3.9 -3.3h-1.9v-2.4h-4v2.4h-1.9z" fill="#ee4a22" stroke="#ffeee6" stroke-width="0.85" stroke-linejoin="round"/><path d="M493 277.25l3.9 -3.3h-1.9v-2.4h-4v2.4h-1.9z" fill="#ee4a22" stroke="#ffeee6" stroke-width="0.85" stroke-linejoin="round"/><path d="M493 294.5l3.9 3.3h-1.9v2.4h-4v-2.4h-1.9z" fill="#1c6bd0" stroke="#e4eeff" stroke-width="0.85" stroke-linejoin="round"/><path d="M488 306.75l3.9 -3.3h-1.9v-2.4h-4v2.4h-1.9z" fill="#ee4a22" stroke="#ffeee6" stroke-width="0.85" stroke-linejoin="round"/><path d="M486.25 308.25l3.9 3.3h-1.9v2.4h-4v-2.4h-1.9z" fill="#1c6bd0" stroke="#e4eeff" stroke-width="0.85" stroke-linejoin="round"/><path d="M471.75 337l3.9 3.3h-1.9v2.4h-4v-2.4h-1.9z" fill="#1c6bd0" stroke="#e4eeff" stroke-width="0.85" stroke-linejoin="round"/><path d="M471.75 348.25l3.9 -3.3h-1.9v-2.4h-4v2.4h-1.9z" fill="#ee4a22" stroke="#ffeee6" stroke-width="0.85" stroke-linejoin="round"/><path d="M500 336.5l3.9 3.3h-1.9v2.4h-4v-2.4h-1.9z" fill="#1c6bd0" stroke="#e4eeff" stroke-width="0.85" stroke-linejoin="round"/><path d="M500 348l3.9 -3.3h-1.9v-2.4h-4v2.4h-1.9z" fill="#ee4a22" stroke="#ffeee6" stroke-width="0.85" stroke-linejoin="round"/><path d="M500 347.5l3.9 3.3h-1.9v2.4h-4v-2.4h-1.9z" fill="#1c6bd0" stroke="#e4eeff" stroke-width="0.85" stroke-linejoin="round"/><path d="M500 351.5l3.9 3.3h-1.9v2.4h-4v-2.4h-1.9z" fill="#1c6bd0" stroke="#e4eeff" stroke-width="0.85" stroke-linejoin="round"/><path d="M500 362.75l3.9 3.3h-1.9v2.4h-4v-2.4h-1.9z" fill="#1c6bd0" stroke="#e4eeff" stroke-width="0.85" stroke-linejoin="round"/><path d="M500.75 369l3.9 3.3h-1.9v2.4h-4v-2.4h-1.9z" fill="#1c6bd0" stroke="#e4eeff" stroke-width="0.85" stroke-linejoin="round"/><path d="M514.25 275l3.9 -3.3h-1.9v-2.4h-4v2.4h-1.9z" fill="#ee4a22" stroke="#ffeee6" stroke-width="0.85" stroke-linejoin="round"/><path d="M514.25 292.5l3.9 3.3h-1.9v2.4h-4v-2.4h-1.9z" fill="#1c6bd0" stroke="#e4eeff" stroke-width="0.85" stroke-linejoin="round"/><path d="M518.75 270.75l3.9 3.3h-1.9v2.4h-4v-2.4h-1.9z" fill="#1c6bd0" stroke="#e4eeff" stroke-width="0.85" stroke-linejoin="round"/><path d="M522 271.25l3.9 3.3h-1.9v2.4h-4v-2.4h-1.9z" fill="#1c6bd0" stroke="#e4eeff" stroke-width="0.85" stroke-linejoin="round"/><path d="M522 281.25l3.9 -3.3h-1.9v-2.4h-4v2.4h-1.9z" fill="#ee4a22" stroke="#ffeee6" stroke-width="0.85" stroke-linejoin="round"/><path d="M604.5 219.25l3.9 -3.3h-1.9v-2.4h-4v2.4h-1.9z" fill="#ee4a22" stroke="#ffeee6" stroke-width="0.85" stroke-linejoin="round"/><path d="M604.5 219l3.9 3.3h-1.9v2.4h-4v-2.4h-1.9z" fill="#1c6bd0" stroke="#e4eeff" stroke-width="0.85" stroke-linejoin="round"/><path d="M606 230l3.9 -3.3h-1.9v-2.4h-4v2.4h-1.9z" fill="#ee4a22" stroke="#ffeee6" stroke-width="0.85" stroke-linejoin="round"/><path d="M607 235l3.9 -3.3h-1.9v-2.4h-4v2.4h-1.9z" fill="#ee4a22" stroke="#ffeee6" stroke-width="0.85" stroke-linejoin="round"/><path d="M602.5 230.75l3.9 3.3h-1.9v2.4h-4v-2.4h-1.9z" fill="#1c6bd0" stroke="#e4eeff" stroke-width="0.85" stroke-linejoin="round"/><path d="M600 238.25l3.9 3.3h-1.9v2.4h-4v-2.4h-1.9z" fill="#1c6bd0" stroke="#e4eeff" stroke-width="0.85" stroke-linejoin="round"/><path d="M590.75 251.75l3.9 -3.3h-1.9v-2.4h-4v2.4h-1.9z" fill="#ee4a22" stroke="#ffeee6" stroke-width="0.85" stroke-linejoin="round"/><path d="M590.75 252.5l3.9 3.3h-1.9v2.4h-4v-2.4h-1.9z" fill="#1c6bd0" stroke="#e4eeff" stroke-width="0.85" stroke-linejoin="round"/><path d="M591.75 263.75l3.9 -3.3h-1.9v-2.4h-4v2.4h-1.9z" fill="#ee4a22" stroke="#ffeee6" stroke-width="0.85" stroke-linejoin="round"/><path d="M705.75 249.25l3.9 -3.3h-1.9v-2.4h-4v2.4h-1.9z" fill="#ee4a22" stroke="#ffeee6" stroke-width="0.85" stroke-linejoin="round"/><path d="M712 244.5l3.9 3.3h-1.9v2.4h-4v-2.4h-1.9z" fill="#1c6bd0" stroke="#e4eeff" stroke-width="0.85" stroke-linejoin="round"/><path d="M712 255.5l3.9 -3.3h-1.9v-2.4h-4v2.4h-1.9z" fill="#ee4a22" stroke="#ffeee6" stroke-width="0.85" stroke-linejoin="round"/><path d="M705.75 265.5l3.9 -3.3h-1.9v-2.4h-4v2.4h-1.9z" fill="#ee4a22" stroke="#ffeee6" stroke-width="0.85" stroke-linejoin="round"/><path d="M705.75 265l3.9 3.3h-1.9v2.4h-4v-2.4h-1.9z" fill="#1c6bd0" stroke="#e4eeff" stroke-width="0.85" stroke-linejoin="round"/><path d="M792.5 228l3.9 -3.3h-1.9v-2.4h-4v2.4h-1.9z" fill="#ee4a22" stroke="#ffeee6" stroke-width="0.85" stroke-linejoin="round"/><path d="M792 240l3.9 3.3h-1.9v2.4h-4v-2.4h-1.9z" fill="#1c6bd0" stroke="#e4eeff" stroke-width="0.85" stroke-linejoin="round"/><path d="M792 251.75l3.9 -3.3h-1.9v-2.4h-4v2.4h-1.9z" fill="#ee4a22" stroke="#ffeee6" stroke-width="0.85" stroke-linejoin="round"/><path d="M790.75 253.75l3.9 3.3h-1.9v2.4h-4v-2.4h-1.9z" fill="#1c6bd0" stroke="#e4eeff" stroke-width="0.85" stroke-linejoin="round"/><path d="M789.5 272.5l3.9 -3.3h-1.9v-2.4h-4v2.4h-1.9z" fill="#ee4a22" stroke="#ffeee6" stroke-width="0.85" stroke-linejoin="round"/><path d="M833 259.75l3.9 -3.3h-1.9v-2.4h-4v2.4h-1.9z" fill="#ee4a22" stroke="#ffeee6" stroke-width="0.85" stroke-linejoin="round"/><path d="M857.5 259.75l3.9 -3.3h-1.9v-2.4h-4v2.4h-1.9z" fill="#ee4a22" stroke="#ffeee6" stroke-width="0.85" stroke-linejoin="round"/><path d="M856.75 261.25l3.9 3.3h-1.9v2.4h-4v-2.4h-1.9z" fill="#1c6bd0" stroke="#e4eeff" stroke-width="0.85" stroke-linejoin="round"/><path d="M614 269.5l3.9 3.3h-1.9v2.4h-4v-2.4h-1.9z" fill="#1c6bd0" stroke="#e4eeff" stroke-width="0.85" stroke-linejoin="round"/><path d="M614 280.5l3.9 -3.3h-1.9v-2.4h-4v2.4h-1.9z" fill="#ee4a22" stroke="#ffeee6" stroke-width="0.85" stroke-linejoin="round"/><path d="M622.5 280l3.9 -3.3h-1.9v-2.4h-4v2.4h-1.9z" fill="#ee4a22" stroke="#ffeee6" stroke-width="0.85" stroke-linejoin="round"/><path d="M625 280.75l3.9 3.3h-1.9v2.4h-4v-2.4h-1.9z" fill="#1c6bd0" stroke="#e4eeff" stroke-width="0.85" stroke-linejoin="round"/><path d="M625 287l3.9 3.3h-1.9v2.4h-4v-2.4h-1.9z" fill="#1c6bd0" stroke="#e4eeff" stroke-width="0.85" stroke-linejoin="round"/><path d="M626.5 293.25l3.9 3.3h-1.9v2.4h-4v-2.4h-1.9z" fill="#1c6bd0" stroke="#e4eeff" stroke-width="0.85" stroke-linejoin="round"/><path d="M625.75 299.5l3.9 3.3h-1.9v2.4h-4v-2.4h-1.9z" fill="#1c6bd0" stroke="#e4eeff" stroke-width="0.85" stroke-linejoin="round"/><path d="M625.75 305l3.9 3.3h-1.9v2.4h-4v-2.4h-1.9z" fill="#1c6bd0" stroke="#e4eeff" stroke-width="0.85" stroke-linejoin="round"/><path d="M638 280l3.9 -3.3h-1.9v-2.4h-4v2.4h-1.9z" fill="#ee4a22" stroke="#ffeee6" stroke-width="0.85" stroke-linejoin="round"/><path d="M642.5 272.75l3.9 3.3h-1.9v2.4h-4v-2.4h-1.9z" fill="#1c6bd0" stroke="#e4eeff" stroke-width="0.85" stroke-linejoin="round"/><path d="M642.5 283.5l3.9 -3.3h-1.9v-2.4h-4v2.4h-1.9z" fill="#ee4a22" stroke="#ffeee6" stroke-width="0.85" stroke-linejoin="round"/><path d="M637.5 282l3.9 3.3h-1.9v2.4h-4v-2.4h-1.9z" fill="#1c6bd0" stroke="#e4eeff" stroke-width="0.85" stroke-linejoin="round"/><path d="M636.25 297l3.9 3.3h-1.9v2.4h-4v-2.4h-1.9z" fill="#1c6bd0" stroke="#e4eeff" stroke-width="0.85" stroke-linejoin="round"/><path d="M635 307.5l3.9 -3.3h-1.9v-2.4h-4v2.4h-1.9z" fill="#ee4a22" stroke="#ffeee6" stroke-width="0.85" stroke-linejoin="round"/><path d="M636.25 305.75l3.9 3.3h-1.9v2.4h-4v-2.4h-1.9z" fill="#1c6bd0" stroke="#e4eeff" stroke-width="0.85" stroke-linejoin="round"/><path d="M674.25 281.75l3.9 -3.3h-1.9v-2.4h-4v2.4h-1.9z" fill="#ee4a22" stroke="#ffeee6" stroke-width="0.85" stroke-linejoin="round"/><path d="M674.25 287.25l3.9 -3.3h-1.9v-2.4h-4v2.4h-1.9z" fill="#ee4a22" stroke="#ffeee6" stroke-width="0.85" stroke-linejoin="round"/><path d="M671.25 289.5l3.9 3.3h-1.9v2.4h-4v-2.4h-1.9z" fill="#1c6bd0" stroke="#e4eeff" stroke-width="0.85" stroke-linejoin="round"/><path d="M665.75 294.5l3.9 3.3h-1.9v2.4h-4v-2.4h-1.9z" fill="#1c6bd0" stroke="#e4eeff" stroke-width="0.85" stroke-linejoin="round"/><path d="M663.25 300l3.9 3.3h-1.9v2.4h-4v-2.4h-1.9z" fill="#1c6bd0" stroke="#e4eeff" stroke-width="0.85" stroke-linejoin="round"/><path d="M663.25 310.5l3.9 -3.3h-1.9v-2.4h-4v2.4h-1.9z" fill="#ee4a22" stroke="#ffeee6" stroke-width="0.85" stroke-linejoin="round"/><path d="M663.25 315l3.9 -3.3h-1.9v-2.4h-4v2.4h-1.9z" fill="#ee4a22" stroke="#ffeee6" stroke-width="0.85" stroke-linejoin="round"/><path d="M663.25 315l3.9 3.3h-1.9v2.4h-4v-2.4h-1.9z" fill="#1c6bd0" stroke="#e4eeff" stroke-width="0.85" stroke-linejoin="round"/><path d="M694.25 278l3.9 -3.3h-1.9v-2.4h-4v2.4h-1.9z" fill="#ee4a22" stroke="#ffeee6" stroke-width="0.85" stroke-linejoin="round"/><path d="M693 280l3.9 3.3h-1.9v2.4h-4v-2.4h-1.9z" fill="#1c6bd0" stroke="#e4eeff" stroke-width="0.85" stroke-linejoin="round"/><path d="M702 291.5l3.9 3.3h-1.9v2.4h-4v-2.4h-1.9z" fill="#1c6bd0" stroke="#e4eeff" stroke-width="0.85" stroke-linejoin="round"/><path d="M722.5 296.5l3.9 3.3h-1.9v2.4h-4v-2.4h-1.9z" fill="#1c6bd0" stroke="#e4eeff" stroke-width="0.85" stroke-linejoin="round"/><path d="M721.25 308l3.9 -3.3h-1.9v-2.4h-4v2.4h-1.9z" fill="#ee4a22" stroke="#ffeee6" stroke-width="0.85" stroke-linejoin="round"/><path d="M721.25 307.75l3.9 3.3h-1.9v2.4h-4v-2.4h-1.9z" fill="#1c6bd0" stroke="#e4eeff" stroke-width="0.85" stroke-linejoin="round"/><path d="M788.25 278.25l3.9 3.3h-1.9v2.4h-4v-2.4h-1.9z" fill="#1c6bd0" stroke="#e4eeff" stroke-width="0.85" stroke-linejoin="round"/><path d="M802.5 293.5l3.9 -3.3h-1.9v-2.4h-4v2.4h-1.9z" fill="#ee4a22" stroke="#ffeee6" stroke-width="0.85" stroke-linejoin="round"/><path d="M802.5 309.5l3.9 3.3h-1.9v2.4h-4v-2.4h-1.9z" fill="#1c6bd0" stroke="#e4eeff" stroke-width="0.85" stroke-linejoin="round"/><path d="M817.5 303l3.9 -3.3h-1.9v-2.4h-4v2.4h-1.9z" fill="#ee4a22" stroke="#ffeee6" stroke-width="0.85" stroke-linejoin="round"/><path d="M820.5 299.5l3.9 3.3h-1.9v2.4h-4v-2.4h-1.9z" fill="#1c6bd0" stroke="#e4eeff" stroke-width="0.85" stroke-linejoin="round"/><path d="M820.5 311l3.9 -3.3h-1.9v-2.4h-4v2.4h-1.9z" fill="#ee4a22" stroke="#ffeee6" stroke-width="0.85" stroke-linejoin="round"/><path d="M825 292.75l3.9 3.3h-1.9v2.4h-4v-2.4h-1.9z" fill="#1c6bd0" stroke="#e4eeff" stroke-width="0.85" stroke-linejoin="round"/><path d="M833 277.5l3.9 3.3h-1.9v2.4h-4v-2.4h-1.9z" fill="#1c6bd0" stroke="#e4eeff" stroke-width="0.85" stroke-linejoin="round"/><path d="M913 233.75l3.9 -3.3h-1.9v-2.4h-4v2.4h-1.9z" fill="#ee4a22" stroke="#ffeee6" stroke-width="0.85" stroke-linejoin="round"/><path d="M915 238l3.9 -3.3h-1.9v-2.4h-4v2.4h-1.9z" fill="#ee4a22" stroke="#ffeee6" stroke-width="0.85" stroke-linejoin="round"/><path d="M919.5 236.75l3.9 -3.3h-1.9v-2.4h-4v2.4h-1.9z" fill="#ee4a22" stroke="#ffeee6" stroke-width="0.85" stroke-linejoin="round"/><path d="M912 238.75l3.9 3.3h-1.9v2.4h-4v-2.4h-1.9z" fill="#1c6bd0" stroke="#e4eeff" stroke-width="0.85" stroke-linejoin="round"/><path d="M912 251l3.9 -3.3h-1.9v-2.4h-4v2.4h-1.9z" fill="#ee4a22" stroke="#ffeee6" stroke-width="0.85" stroke-linejoin="round"/><path d="M905.5 256.75l3.9 -3.3h-1.9v-2.4h-4v2.4h-1.9z" fill="#ee4a22" stroke="#ffeee6" stroke-width="0.85" stroke-linejoin="round"/><path d="M911.25 252l3.9 3.3h-1.9v2.4h-4v-2.4h-1.9z" fill="#1c6bd0" stroke="#e4eeff" stroke-width="0.85" stroke-linejoin="round"/><path d="M905 259l3.9 3.3h-1.9v2.4h-4v-2.4h-1.9z" fill="#1c6bd0" stroke="#e4eeff" stroke-width="0.85" stroke-linejoin="round"/><path d="M900 268l3.9 -3.3h-1.9v-2.4h-4v2.4h-1.9z" fill="#ee4a22" stroke="#ffeee6" stroke-width="0.85" stroke-linejoin="round"/><path d="M986.25 165l3.9 -3.3h-1.9v-2.4h-4v2.4h-1.9z" fill="#ee4a22" stroke="#ffeee6" stroke-width="0.85" stroke-linejoin="round"/><path d="M986.25 182.25l3.9 -3.3h-1.9v-2.4h-4v2.4h-1.9z" fill="#ee4a22" stroke="#ffeee6" stroke-width="0.85" stroke-linejoin="round"/><path d="M986.25 182.5l3.9 3.3h-1.9v2.4h-4v-2.4h-1.9z" fill="#1c6bd0" stroke="#e4eeff" stroke-width="0.85" stroke-linejoin="round"/><path d="M1003.75 139.75l3.9 -3.3h-1.9v-2.4h-4v2.4h-1.9z" fill="#ee4a22" stroke="#ffeee6" stroke-width="0.85" stroke-linejoin="round"/><path d="M1002.5 140.75l3.9 3.3h-1.9v2.4h-4v-2.4h-1.9z" fill="#1c6bd0" stroke="#e4eeff" stroke-width="0.85" stroke-linejoin="round"/><path d="M1022 133.5l3.9 -3.3h-1.9v-2.4h-4v2.4h-1.9z" fill="#ee4a22" stroke="#ffeee6" stroke-width="0.85" stroke-linejoin="round"/><path d="M1025 135.75l3.9 3.3h-1.9v2.4h-4v-2.4h-1.9z" fill="#1c6bd0" stroke="#e4eeff" stroke-width="0.85" stroke-linejoin="round"/><path d="M1033.25 143.75l3.9 -3.3h-1.9v-2.4h-4v2.4h-1.9z" fill="#ee4a22" stroke="#ffeee6" stroke-width="0.85" stroke-linejoin="round"/><path d="M1033.25 161.5l3.9 3.3h-1.9v2.4h-4v-2.4h-1.9z" fill="#1c6bd0" stroke="#e4eeff" stroke-width="0.85" stroke-linejoin="round"/><path d="M1059.25 173.75l3.9 3.3h-1.9v2.4h-4v-2.4h-1.9z" fill="#1c6bd0" stroke="#e4eeff" stroke-width="0.85" stroke-linejoin="round"/><path d="M1059.25 185.5l3.9 -3.3h-1.9v-2.4h-4v2.4h-1.9z" fill="#ee4a22" stroke="#ffeee6" stroke-width="0.85" stroke-linejoin="round"/><path d="M1060 194.25l3.9 -3.3h-1.9v-2.4h-4v2.4h-1.9z" fill="#ee4a22" stroke="#ffeee6" stroke-width="0.85" stroke-linejoin="round"/><path d="M1060 195l3.9 3.3h-1.9v2.4h-4v-2.4h-1.9z" fill="#1c6bd0" stroke="#e4eeff" stroke-width="0.85" stroke-linejoin="round"/><path d="M1064.25 202.25l3.9 -3.3h-1.9v-2.4h-4v2.4h-1.9z" fill="#ee4a22" stroke="#ffeee6" stroke-width="0.85" stroke-linejoin="round"/><path d="M1065 204.5l3.9 3.3h-1.9v2.4h-4v-2.4h-1.9z" fill="#1c6bd0" stroke="#e4eeff" stroke-width="0.85" stroke-linejoin="round"/><path d="M1074.25 209.25l3.9 -3.3h-1.9v-2.4h-4v2.4h-1.9z" fill="#ee4a22" stroke="#ffeee6" stroke-width="0.85" stroke-linejoin="round"/><path d="M1077.5 211.75l3.9 -3.3h-1.9v-2.4h-4v2.4h-1.9z" fill="#ee4a22" stroke="#ffeee6" stroke-width="0.85" stroke-linejoin="round"/><path d="M1078 230.75l3.9 3.3h-1.9v2.4h-4v-2.4h-1.9z" fill="#1c6bd0" stroke="#e4eeff" stroke-width="0.85" stroke-linejoin="round"/><path d="M1087.5 226.5l3.9 3.3h-1.9v2.4h-4v-2.4h-1.9z" fill="#1c6bd0" stroke="#e4eeff" stroke-width="0.85" stroke-linejoin="round"/><path d="M1087.5 232l3.9 3.3h-1.9v2.4h-4v-2.4h-1.9z" fill="#1c6bd0" stroke="#e4eeff" stroke-width="0.85" stroke-linejoin="round"/><path d="M1087.5 243.75l3.9 -3.3h-1.9v-2.4h-4v2.4h-1.9z" fill="#ee4a22" stroke="#ffeee6" stroke-width="0.85" stroke-linejoin="round"/><path d="M857.5 259.75l3.9 -3.3h-1.9v-2.4h-4v2.4h-1.9z" fill="#ee4a22" stroke="#ffeee6" stroke-width="0.85" stroke-linejoin="round"/><path d="M856.5 261.25l3.9 3.3h-1.9v2.4h-4v-2.4h-1.9z" fill="#1c6bd0" stroke="#e4eeff" stroke-width="0.85" stroke-linejoin="round"/><path d="M899.25 268l3.9 -3.3h-1.9v-2.4h-4v2.4h-1.9z" fill="#ee4a22" stroke="#ffeee6" stroke-width="0.85" stroke-linejoin="round"/><path d="M899.25 272.5l3.9 -3.3h-1.9v-2.4h-4v2.4h-1.9z" fill="#ee4a22" stroke="#ffeee6" stroke-width="0.85" stroke-linejoin="round"/><path d="M899.25 270.25l3.9 3.3h-1.9v2.4h-4v-2.4h-1.9z" fill="#1c6bd0" stroke="#e4eeff" stroke-width="0.85" stroke-linejoin="round"/><path d="M891.75 280l3.9 -3.3h-1.9v-2.4h-4v2.4h-1.9z" fill="#ee4a22" stroke="#ffeee6" stroke-width="0.85" stroke-linejoin="round"/><path d="M886.25 280.75l3.9 3.3h-1.9v2.4h-4v-2.4h-1.9z" fill="#1c6bd0" stroke="#e4eeff" stroke-width="0.85" stroke-linejoin="round"/><path d="M890.75 282l3.9 3.3h-1.9v2.4h-4v-2.4h-1.9z" fill="#1c6bd0" stroke="#e4eeff" stroke-width="0.85" stroke-linejoin="round"/><path d="M870.75 285.75l3.9 3.3h-1.9v2.4h-4v-2.4h-1.9z" fill="#1c6bd0" stroke="#e4eeff" stroke-width="0.85" stroke-linejoin="round"/><path d="M868.75 296.25l3.9 -3.3h-1.9v-2.4h-4v2.4h-1.9z" fill="#ee4a22" stroke="#ffeee6" stroke-width="0.85" stroke-linejoin="round"/></svg>
<div class="t" style="top:101.55px;font-size:7px;line-height:9.1px;color:#e6e6e6;left:1143.9px;transform-origin:0 50%;transform:scaleX(0.9641);">94678.00</div>
<div class="t" style="top:120.39px;font-size:7px;line-height:9.1px;color:#e6e6e6;left:1143.9px;transform-origin:0 50%;transform:scaleX(0.9641);">93949.70</div>
<div class="t" style="top:139.23px;font-size:7px;line-height:9.1px;color:#e6e6e6;left:1143.9px;transform-origin:0 50%;transform:scaleX(0.9641);">93221.40</div>
<div class="t" style="top:158.07px;font-size:7px;line-height:9.1px;color:#e6e6e6;left:1143.9px;transform-origin:0 50%;transform:scaleX(0.9641);">92493.10</div>
<div class="t" style="top:176.91px;font-size:7px;line-height:9.1px;color:#e6e6e6;left:1143.9px;transform-origin:0 50%;transform:scaleX(0.9641);">91764.80</div>
<div class="t" style="top:195.75px;font-size:7px;line-height:9.1px;color:#e6e6e6;left:1143.9px;transform-origin:0 50%;transform:scaleX(0.9641);">91036.50</div>
<div class="t" style="top:214.59px;font-size:7px;line-height:9.1px;color:#e6e6e6;left:1143.9px;transform-origin:0 50%;transform:scaleX(0.9641);">90308.20</div>
<div class="t" style="top:233.43px;font-size:7px;line-height:9.1px;color:#e6e6e6;left:1143.9px;transform-origin:0 50%;transform:scaleX(0.9641);">89579.90</div>
<div class="t" style="top:252.27px;font-size:7px;line-height:9.1px;color:#e6e6e6;left:1143.9px;transform-origin:0 50%;transform:scaleX(0.9641);">88851.60</div>
<div class="t" style="top:271.11px;font-size:7px;line-height:9.1px;color:#e6e6e6;left:1143.9px;transform-origin:0 50%;transform:scaleX(0.9641);">88123.30</div>
<div class="t" style="top:289.95px;font-size:7px;line-height:9.1px;color:#e6e6e6;left:1143.9px;transform-origin:0 50%;transform:scaleX(0.9641);">87395.00</div>
<div class="t" style="top:308.79px;font-size:7px;line-height:9.1px;color:#e6e6e6;left:1143.9px;transform-origin:0 50%;transform:scaleX(0.9641);">86666.70</div>
<div class="t" style="top:327.63px;font-size:7px;line-height:9.1px;color:#e6e6e6;left:1143.9px;transform-origin:0 50%;transform:scaleX(0.9641);">85938.40</div>
<div class="t" style="top:346.47px;font-size:7px;line-height:9.1px;color:#e6e6e6;left:1143.9px;transform-origin:0 50%;transform:scaleX(0.9641);">85210.10</div>
<div class="t" style="top:365.31px;font-size:7px;line-height:9.1px;color:#e6e6e6;left:1143.9px;transform-origin:0 50%;transform:scaleX(0.9641);">84481.80</div>
<div class="t" style="top:384.15px;font-size:7px;line-height:9.1px;color:#e6e6e6;left:1143.9px;transform-origin:0 50%;transform:scaleX(0.9641);">83753.50</div>
<div style="left:1141.2px;top:207.2px;width:32.4px;height:8.2px;background:#aebcd0;"></div>
<div class="t" style="top:206.85px;font-size:7px;line-height:9.1px;color:#101010;left:1143.9px;transform-origin:0 50%;transform:scaleX(0.9641);">90610.00</div>
<div class="t" style="top:409.12px;font-size:7.2px;line-height:9.36px;color:#e6e6e6;left:247.35px;transform-origin:0 50%;transform:scaleX(0.9151);background:#000;">9 Dec 2025</div>
<div class="t" style="top:409.12px;font-size:7.2px;line-height:9.36px;color:#e6e6e6;left:285.03px;transform-origin:0 50%;transform:scaleX(0.9150);background:#000;">11 Dec 06:00</div>
<div class="t" style="top:409.12px;font-size:7.2px;line-height:9.36px;color:#e6e6e6;left:322.71px;transform-origin:0 50%;transform:scaleX(0.9035);background:#000;">12 Dec 14:00</div>
<div class="t" style="top:409.12px;font-size:7.2px;line-height:9.36px;color:#e6e6e6;left:360.39px;transform-origin:0 50%;transform:scaleX(0.9035);background:#000;">13 Dec 22:00</div>
<div class="t" style="top:409.12px;font-size:7.2px;line-height:9.36px;color:#e6e6e6;left:398.07px;transform-origin:0 50%;transform:scaleX(0.9035);background:#000;">15 Dec 06:00</div>
<div class="t" style="top:409.12px;font-size:7.2px;line-height:9.36px;color:#e6e6e6;left:435.75px;transform-origin:0 50%;transform:scaleX(0.9035);background:#000;">16 Dec 14:00</div>
<div class="t" style="top:409.12px;font-size:7.2px;line-height:9.36px;color:#e6e6e6;left:473.43px;transform-origin:0 50%;transform:scaleX(0.9035);background:#000;">17 Dec 22:00</div>
<div class="t" style="top:409.12px;font-size:7.2px;line-height:9.36px;color:#e6e6e6;left:511.11px;transform-origin:0 50%;transform:scaleX(0.9035);background:#000;">19 Dec 06:00</div>
<div class="t" style="top:409.12px;font-size:7.2px;line-height:9.36px;color:#e6e6e6;left:548.79px;transform-origin:0 50%;transform:scaleX(0.9035);background:#000;">20 Dec 14:00</div>
<div class="t" style="top:409.12px;font-size:7.2px;line-height:9.36px;color:#e6e6e6;left:586.47px;transform-origin:0 50%;transform:scaleX(0.9035);background:#000;">21 Dec 22:00</div>
<div class="t" style="top:409.12px;font-size:7.2px;line-height:9.36px;color:#e6e6e6;left:624.15px;transform-origin:0 50%;transform:scaleX(0.9035);background:#000;">23 Dec 06:00</div>
<div class="t" style="top:409.12px;font-size:7.2px;line-height:9.36px;color:#e6e6e6;left:661.83px;transform-origin:0 50%;transform:scaleX(0.9035);background:#000;">24 Dec 14:00</div>
<div class="t" style="top:409.12px;font-size:7.2px;line-height:9.36px;color:#e6e6e6;left:699.51px;transform-origin:0 50%;transform:scaleX(0.9035);background:#000;">25 Dec 22:00</div>
<div class="t" style="top:409.12px;font-size:7.2px;line-height:9.36px;color:#e6e6e6;left:737.19px;transform-origin:0 50%;transform:scaleX(0.9035);background:#000;">27 Dec 06:00</div>
<div class="t" style="top:409.12px;font-size:7.2px;line-height:9.36px;color:#e6e6e6;left:774.87px;transform-origin:0 50%;transform:scaleX(0.9035);background:#000;">28 Dec 14:00</div>
<div class="t" style="top:409.12px;font-size:7.2px;line-height:9.36px;color:#e6e6e6;left:812.55px;transform-origin:0 50%;transform:scaleX(0.9035);background:#000;">29 Dec 22:00</div>
<div class="t" style="top:409.12px;font-size:7.2px;line-height:9.36px;color:#e6e6e6;left:850.23px;transform-origin:0 50%;transform:scaleX(0.9035);background:#000;">31 Dec 06:00</div>
<div class="t" style="top:409.12px;font-size:7.2px;line-height:9.36px;color:#e6e6e6;left:887.91px;transform-origin:0 50%;transform:scaleX(0.9380);background:#000;">1 Jan 14:00</div>
<div class="t" style="top:409.12px;font-size:7.2px;line-height:9.36px;color:#e6e6e6;left:925.59px;transform-origin:0 50%;transform:scaleX(0.9380);background:#000;">2 Jan 22:00</div>
<div class="t" style="top:409.12px;font-size:7.2px;line-height:9.36px;color:#e6e6e6;left:963.27px;transform-origin:0 50%;transform:scaleX(0.9380);background:#000;">4 Jan 06:00</div>
<div class="t" style="top:409.12px;font-size:7.2px;line-height:9.36px;color:#e6e6e6;left:1000.95px;transform-origin:0 50%;transform:scaleX(0.9380);background:#000;">5 Jan 14:00</div>
<div class="t" style="top:409.12px;font-size:7.2px;line-height:9.36px;color:#e6e6e6;left:1038.63px;transform-origin:0 50%;transform:scaleX(0.9380);background:#000;">6 Jan 22:00</div>
<div class="t" style="top:409.12px;font-size:7.2px;line-height:9.36px;color:#e6e6e6;left:1076.31px;transform-origin:0 50%;transform:scaleX(0.9380);background:#000;">8 Jan 06:00</div>
<div class="t" style="top:409.12px;font-size:7.2px;line-height:9.36px;color:#e6e6e6;left:1113.99px;transform-origin:0 50%;transform:scaleX(0.9380);background:#000;">9 Jan 14:00</div>
<div class="t" style="top:99.65px;font-size:7px;line-height:9.1px;color:#e6e6e6;left:281.75px;transform-origin:0 50%;transform:scaleX(0.8792);">BTCUSD, H1:</div>
<div class="t" style="top:99.65px;font-size:7px;line-height:9.1px;color:#e6e6e6;left:326.05px;transform-origin:0 50%;transform:scaleX(0.9364);">Bitcoin (USD)</div>
<div class="t" style="top:99.65px;font-size:7px;line-height:9.1px;color:#e6e6e6;left:370.95px;transform-origin:0 50%;transform:scaleX(0.9556);">90544.50</div>
<div class="t" style="top:99.65px;font-size:7px;line-height:9.1px;color:#e6e6e6;left:401.55px;transform-origin:0 50%;transform:scaleX(0.9693);">90643.00</div>
<div class="t" style="top:99.65px;font-size:7px;line-height:9.1px;color:#e6e6e6;left:432.75px;transform-origin:0 50%;transform:scaleX(0.9350);">90497.50</div>
<div class="t" style="top:99.65px;font-size:7px;line-height:9.1px;color:#e6e6e6;left:462.75px;transform-origin:0 50%;transform:scaleX(0.9350);">90610.00</div>
<div class="t" style="top:99.65px;font-size:7px;line-height:9.1px;color:#e6e6e6;left:495.35px;transform-origin:0 50%;transform:scaleX(0.9054);">3780</div>
<div style="left:246px;top:94px;width:894.4px;height:30px;overflow:hidden;"><div class="t" style="top:17.45px;font-size:7px;line-height:9.1px;color:#e6e6e6;left:5.5px;transform-origin:0 50%;transform:scaleX(0.9871);white-space:pre;">The Bitcoin Reaper [ShowInfoPanel=true; </div>
<div class="t" style="top:17.45px;font-size:7px;line-height:9.1px;color:#e6e6e6;left:134.75px;transform-origin:0 50%;transform:scaleX(1.0007);white-space:pre;">UpdateInfoTesting=false; </div>
<div class="t" style="top:17.45px;font-size:7px;line-height:9.1px;color:#e6e6e6;left:214px;transform-origin:0 50%;transform:scaleX(0.9799);white-space:pre;">InfoPanelSizeAdjust=1.0; </div>
<div class="t" style="top:17.45px;font-size:7px;line-height:9.1px;color:#e6e6e6;left:292.75px;transform-origin:0 50%;transform:scaleX(0.9744);white-space:pre;">SetFontSize=0; spreadfilter=</div>
<div class="t" style="top:17.45px;font-size:7px;line-height:9.1px;color:#e6e6e6;left:379.2px;transform-origin:0 50%;transform:scaleX(1.1947);white-space:pre;">---------------------------</div>
<div class="t" style="top:17.45px;font-size:7px;line-height:9.1px;color:#e6e6e6;left:454.4px;transform-origin:0 50%;transform:scaleX(1.0638);white-space:pre;"> settings </div>
<div class="t" style="top:17.45px;font-size:7px;line-height:9.1px;color:#e6e6e6;left:484.2px;transform-origin:0 50%;transform:scaleX(1.1947);white-space:pre;">---------------------------</div>
<div class="t" style="top:17.45px;font-size:7px;line-height:9.1px;color:#e6e6e6;left:559.4px;transform-origin:0 50%;transform:scaleX(0.9661);white-space:pre;">; ForceBitcoinSymbol=; </div>
<div class="t" style="top:17.45px;font-size:7px;line-height:9.1px;color:#e6e6e6;left:631px;transform-origin:0 50%;transform:scaleX(0.9949);white-space:pre;">AllowBuyTrades=true; </div>
<div class="t" style="top:17.45px;font-size:7px;line-height:9.1px;color:#e6e6e6;left:701px;transform-origin:0 50%;transform:scaleX(0.9897);white-space:pre;">AllowSellTrades=true; </div>
<div class="t" style="top:17.45px;font-size:7px;line-height:9.1px;color:#e6e6e6;left:770.25px;transform-origin:0 50%;transform:scaleX(0.9477);white-space:pre;">EnableFastSL=false; </div>
<div class="t" style="top:17.45px;font-size:7px;line-height:9.1px;color:#e6e6e6;left:833.5px;transform-origin:0 50%;transform:scaleX(0.9288);white-space:pre;">EnableFastBE_SL=tr</div>
</div>
<svg style="left:249.5px;top:99px;width:30px;height:10px" viewBox="0 0 30 10"><rect x="0.8" y="0.8" width="9.4" height="7.6" fill="#1a2a50"/><path d="M0.8 0.8H5.8V8.4H0.8Z" fill="#7a1a1a"/><path d="M1 2.6H10M1 4.6H10M1 6.6H10" stroke="#000" stroke-width="0.6"/><rect x="0.8" y="0.8" width="5" height="7.6" stroke="#e04a3a" stroke-width="0.9" fill="none"/><rect x="5.8" y="0.8" width="4.4" height="7.6" stroke="#2f7be0" stroke-width="0.9" fill="none"/><rect x="16.4" y="1" width="5" height="7.4" stroke="#e04a3a" stroke-width="0.9" fill="#5a1410"/><rect x="21.4" y="3" width="5.4" height="5.4" stroke="#2f7be0" stroke-width="0.9" fill="#10254a"/><rect x="20.2" y="0.4" width="3.2" height="2.2" fill="#c8c8c8"/></svg>
<div style="left:243.2px;top:421.2px;width:942.25px;height:18.3px;background:#2b2b2b;"></div>
<div style="left:245.6px;top:420.6px;width:939.85px;height:0.9px;background:#8a8a8a;"></div>
<div style="left:309.6px;top:420.6px;width:61.4px;height:14.9px;background:#2b2b2b;border:0.9px solid #a8a8a8;border-top:none;"></div>
<div class="t" style="top:424.08px;font-size:8.8px;line-height:11.44px;color:#f0f0f0;left:256.4px;transform-origin:0 50%;transform:scaleX(0.8712);">BTCUSD,H1</div>
<div class="t" style="top:424.08px;font-size:8.8px;line-height:11.44px;color:#c0c0c0;left:318.15px;transform-origin:0 50%;transform:scaleX(0.8712);">BTCUSD,H1</div>
<svg style="left:380px;top:423px;width:12px;height:12px" viewBox="0 0 12 12"><path d="M2.6 4.2H8.8L9.4 10.6H2Z" stroke="#a86a08" stroke-width="1" fill="#6a4405" stroke-linejoin="round"/><path d="M4.2 4.4V3Q4.2 1.6 5.7 1.6Q7.2 1.6 7.2 3V4.4" stroke="#a86a08" stroke-width="0.9" fill="none"/></svg>
<div class="t" style="top:424.08px;font-size:8.8px;line-height:11.44px;color:#e8e8e8;left:397.15px;transform-origin:0 50%;transform:scaleX(0.9835);">Market</div>
<div style="left:55.2px;top:439px;width:1130.25px;height:0.9px;background:#7a7a7a;"></div>
<div style="left:55.2px;top:439.9px;width:15px;height:182.9px;background:#353849;"></div>
<svg style="left:59.6px;top:444px;width:6px;height:6px" viewBox="0 0 6 6"><path d="M0.5 0.5L5.5 5.5M5.5 0.5L0.5 5.5" stroke="#f0f0f0" stroke-width="1.15"/></svg>
<div class="t" style="left:54.4px;top:619.8px;width:60px;height:14px;font-size:8.1px;line-height:14px;color:#d4d4d4;transform-origin:0 0;transform:rotate(-90deg) scaleX(0.98);">Strategy Tester</div>
<div style="left:70.2px;top:439.9px;width:1103px;height:14.13px;background:#2b2b2b;"></div>
<div class="t" style="top:442.14px;font-size:8.8px;line-height:11.44px;color:#cecece;left:73.9px;transform-origin:0 50%;transform:scaleX(0.9998);">History Quality</div>
<div class="t" style="top:442.14px;font-size:8.8px;line-height:11.44px;color:#cecece;left:402.65px;transform-origin:0 50%;transform:scaleX(0.9019);">100%</div>
<div style="left:70.2px;top:454.03px;width:1103px;height:14.13px;background:#333333;"></div>
<div class="t" style="top:456.27px;font-size:8.8px;line-height:11.44px;color:#cecece;left:73.9px;transform-origin:0 50%;transform:scaleX(0.8815);">Bars</div>
<div class="t" style="top:456.27px;font-size:8.8px;line-height:11.44px;color:#cecece;left:408.9px;transform-origin:0 50%;transform:scaleX(0.9569);">936</div>
<div class="t" style="top:456.27px;font-size:8.8px;line-height:11.44px;color:#cecece;left:446.4px;transform-origin:0 50%;transform:scaleX(0.9132);">Ticks</div>
<div class="t" style="top:456.27px;font-size:8.8px;line-height:11.44px;color:#cecece;left:758.9px;transform-origin:0 50%;transform:scaleX(0.9335);">10461261</div>
<div class="t" style="top:456.27px;font-size:8.8px;line-height:11.44px;color:#cecece;left:818.9px;transform-origin:0 50%;transform:scaleX(0.9765);">Symbols</div>
<div class="t" style="top:456.27px;font-size:8.8px;line-height:11.44px;color:#cecece;left:1166.75px;transform-origin:0 50%;transform:scaleX(0.5721);">1</div>
<div style="left:70.2px;top:468.16px;width:1103px;height:14.13px;background:#2b2b2b;"></div>
<div class="t" style="top:470.4px;font-size:8.8px;line-height:11.44px;color:#cecece;left:73.9px;transform-origin:0 50%;transform:scaleX(1.0260);">Initial Deposit</div>
<div class="t" style="top:470.4px;font-size:8.8px;line-height:11.44px;color:#cecece;left:391.4px;transform-origin:0 50%;transform:scaleX(0.9210);">1 000.00</div>
<div style="left:70.2px;top:482.29px;width:1103px;height:14.13px;background:#333333;"></div>
<div class="t" style="top:484.53px;font-size:8.8px;line-height:11.44px;color:#cecece;left:73.9px;transform-origin:0 50%;transform:scaleX(1.0214);">Total Net Profit</div>
<div class="t" style="top:484.53px;font-size:8.8px;line-height:11.44px;color:#cecece;left:402.65px;transform-origin:0 50%;transform:scaleX(0.9218);">37.36</div>
<div class="t" style="top:484.53px;font-size:8.8px;line-height:11.44px;color:#cecece;left:446.4px;transform-origin:0 50%;transform:scaleX(1.0015);">Balance Drawdown Absolute</div>
<div class="t" style="top:484.53px;font-size:8.8px;line-height:11.44px;color:#cecece;left:775.65px;transform-origin:0 50%;transform:scaleX(0.8991);">35.24</div>
<div class="t" style="top:484.53px;font-size:8.8px;line-height:11.44px;color:#cecece;left:818.9px;transform-origin:0 50%;transform:scaleX(1.0073);">Equity Drawdown Absolute</div>
<div class="t" style="top:484.53px;font-size:8.8px;line-height:11.44px;color:#cecece;left:1149.65px;transform-origin:0 50%;transform:scaleX(0.9218);">36.40</div>
<div style="left:70.2px;top:496.42px;width:1103px;height:14.13px;background:#2b2b2b;"></div>
<div class="t" style="top:498.66px;font-size:8.8px;line-height:11.44px;color:#cecece;left:73.9px;transform-origin:0 50%;transform:scaleX(0.9515);">Gross Profit</div>
<div class="t" style="top:498.66px;font-size:8.8px;line-height:11.44px;color:#cecece;left:398.15px;transform-origin:0 50%;transform:scaleX(0.9214);">387.86</div>
<div class="t" style="top:498.66px;font-size:8.8px;line-height:11.44px;color:#cecece;left:446.4px;transform-origin:0 50%;transform:scaleX(0.9948);">Balance Drawdown Maximal</div>
<div class="t" style="top:498.66px;font-size:8.8px;line-height:11.44px;color:#cecece;left:735.15px;transform-origin:0 50%;transform:scaleX(0.9361);">124.57 (11.44%)</div>
<div class="t" style="top:498.66px;font-size:8.8px;line-height:11.44px;color:#cecece;left:818.9px;transform-origin:0 50%;transform:scaleX(1.0050);">Equity Drawdown Maximal</div>
<div class="t" style="top:498.66px;font-size:8.8px;line-height:11.44px;color:#cecece;left:1109.65px;transform-origin:0 50%;transform:scaleX(0.9267);">136.00 (12.37%)</div>
<div style="left:70.2px;top:510.55px;width:1103px;height:14.13px;background:#333333;"></div>
<div class="t" style="top:512.79px;font-size:8.8px;line-height:11.44px;color:#cecece;left:73.9px;transform-origin:0 50%;transform:scaleX(0.8921);">Gross Loss</div>
<div class="t" style="top:512.79px;font-size:8.8px;line-height:11.44px;color:#cecece;left:395.15px;transform-origin:0 50%;transform:scaleX(0.9314);">-350.50</div>
<div class="t" style="top:512.79px;font-size:8.8px;line-height:11.44px;color:#cecece;left:446.4px;transform-origin:0 50%;transform:scaleX(0.9854);">Balance Drawdown Relative</div>
<div class="t" style="top:512.79px;font-size:8.8px;line-height:11.44px;color:#cecece;left:735.15px;transform-origin:0 50%;transform:scaleX(0.9361);">11.44% (124.57)</div>
<div class="t" style="top:512.79px;font-size:8.8px;line-height:11.44px;color:#cecece;left:818.9px;transform-origin:0 50%;transform:scaleX(0.9950);">Equity Drawdown Relative</div>
<div class="t" style="top:512.79px;font-size:8.8px;line-height:11.44px;color:#cecece;left:1109.65px;transform-origin:0 50%;transform:scaleX(0.9267);">12.37% (136.00)</div>
<div style="left:70.2px;top:524.68px;width:1103px;height:14.13px;background:#2b2b2b;"></div>
<div style="left:70.2px;top:538.81px;width:1103px;height:14.13px;background:#333333;"></div>
<div class="t" style="top:541.05px;font-size:8.8px;line-height:11.44px;color:#cecece;left:73.9px;transform-origin:0 50%;transform:scaleX(0.9745);">Profit Factor</div>
<div class="t" style="top:541.05px;font-size:8.8px;line-height:11.44px;color:#cecece;left:408.15px;transform-origin:0 50%;transform:scaleX(0.8984);">1.11</div>
<div class="t" style="top:541.05px;font-size:8.8px;line-height:11.44px;color:#cecece;left:446.4px;transform-origin:0 50%;transform:scaleX(0.9730);">Expected Payoff</div>
<div class="t" style="top:541.05px;font-size:8.8px;line-height:11.44px;color:#cecece;left:780.15px;transform-origin:0 50%;transform:scaleX(0.8933);">0.22</div>
<div class="t" style="top:541.05px;font-size:8.8px;line-height:11.44px;color:#cecece;left:818.9px;transform-origin:0 50%;transform:scaleX(0.9864);">Margin Level</div>
<div class="t" style="top:541.05px;font-size:8.8px;line-height:11.44px;color:#cecece;left:1133.9px;transform-origin:0 50%;transform:scaleX(0.9095);">1626.83%</div>
<div style="left:70.2px;top:552.94px;width:1103px;height:14.13px;background:#2b2b2b;"></div>
<div class="t" style="top:555.18px;font-size:8.8px;line-height:11.44px;color:#cecece;left:73.9px;transform-origin:0 50%;transform:scaleX(0.9442);">Recovery Factor</div>
<div class="t" style="top:555.18px;font-size:8.8px;line-height:11.44px;color:#cecece;left:407.15px;transform-origin:0 50%;transform:scaleX(0.9225);">0.27</div>
<div class="t" style="top:555.18px;font-size:8.8px;line-height:11.44px;color:#cecece;left:446.4px;transform-origin:0 50%;transform:scaleX(0.9676);">Sharpe Ratio</div>
<div class="t" style="top:555.18px;font-size:8.8px;line-height:11.44px;color:#cecece;left:780.9px;transform-origin:0 50%;transform:scaleX(0.8495);">1.93</div>
<div class="t" style="top:555.18px;font-size:8.8px;line-height:11.44px;color:#cecece;left:818.9px;transform-origin:0 50%;transform:scaleX(0.9730);">Z-Score</div>
<div class="t" style="top:555.18px;font-size:8.8px;line-height:11.44px;color:#cecece;left:1115.15px;transform-origin:0 50%;transform:scaleX(0.9414);">-4.01 (99.74%)</div>
<div style="left:70.2px;top:567.07px;width:1103px;height:14.13px;background:#333333;"></div>
<div class="t" style="top:569.31px;font-size:8.8px;line-height:11.44px;color:#cecece;left:73.9px;transform-origin:0 50%;transform:scaleX(0.9080);">AHPR</div>
<div class="t" style="top:569.31px;font-size:8.8px;line-height:11.44px;color:#cecece;left:367.15px;transform-origin:0 50%;transform:scaleX(0.9273);">1.0002 (0.02%)</div>
<div class="t" style="top:569.31px;font-size:8.8px;line-height:11.44px;color:#cecece;left:446.4px;transform-origin:0 50%;transform:scaleX(0.9641);">LR Correlation</div>
<div class="t" style="top:569.31px;font-size:8.8px;line-height:11.44px;color:#cecece;left:776.9px;transform-origin:0 50%;transform:scaleX(0.9248);">-0.29</div>
<div class="t" style="top:569.31px;font-size:8.8px;line-height:11.44px;color:#cecece;left:818.9px;transform-origin:0 50%;transform:scaleX(0.9586);">OnTester result</div>
<div class="t" style="top:569.31px;font-size:8.8px;line-height:11.44px;color:#cecece;left:1088.4px;transform-origin:0 50%;transform:scaleX(0.9522);">0.4842076739324734</div>
<div style="left:70.2px;top:581.2px;width:1103px;height:14.13px;background:#2b2b2b;"></div>
<div class="t" style="top:583.45px;font-size:8.8px;line-height:11.44px;color:#cecece;left:73.9px;transform-origin:0 50%;transform:scaleX(0.8732);">GHPR</div>
<div class="t" style="top:583.45px;font-size:8.8px;line-height:11.44px;color:#cecece;left:367.15px;transform-origin:0 50%;transform:scaleX(0.9273);">1.0002 (0.02%)</div>
<div class="t" style="top:583.45px;font-size:8.8px;line-height:11.44px;color:#cecece;left:446.4px;transform-origin:0 50%;transform:scaleX(0.9480);">LR Standard Error</div>
<div class="t" style="top:583.45px;font-size:8.8px;line-height:11.44px;color:#cecece;left:775.65px;transform-origin:0 50%;transform:scaleX(0.8991);">26.85</div>
<div style="left:70.2px;top:595.33px;width:1103px;height:9.87px;background:#333333;"></div>
<div style="left:445.2px;top:441.4px;width:689.4px;height:10.6px;background:#96fa80;"></div>
<div style="left:1134.6px;top:441.4px;width:36.8px;height:10.6px;background:#c9c9c9;"></div>
<div style="left:1173.2px;top:439.9px;width:12.25px;height:165.3px;background:#1c1c1c;"></div>
<div style="left:1178.8px;top:452.4px;width:1.4px;height:19.8px;background:#c4c4c4;border-radius:1px;"></div>
<div style="left:70.2px;top:605.2px;width:1115.25px;height:17.6px;background:#2b2b2b;"></div>
<div style="left:70.2px;top:604.8px;width:141.2px;height:0.9px;background:#9a9a9a;"></div>
<div style="left:258px;top:604.8px;width:927.45px;height:0.9px;background:#9a9a9a;"></div>
<div style="left:211.4px;top:604.8px;width:47px;height:15.6px;background:#2b2b2b;border:0.9px solid #a8a8a8;border-top:none;"></div>
<div class="t" style="top:608.18px;font-size:8.8px;line-height:11.44px;color:#ececec;left:81.9px;transform-origin:0 50%;transform:scaleX(0.9666);">Overview</div>
<div class="t" style="top:608.18px;font-size:8.8px;line-height:11.44px;color:#ececec;left:133.15px;transform-origin:0 50%;transform:scaleX(0.9733);">Settings</div>
<div class="t" style="top:608.18px;font-size:8.8px;line-height:11.44px;color:#ececec;left:179.4px;transform-origin:0 50%;transform:scaleX(0.9782);">Inputs</div>
<div class="t" style="top:608.18px;font-size:8.8px;line-height:11.44px;color:#a8a8a8;left:218.9px;transform-origin:0 50%;transform:scaleX(0.9393);">Backtest</div>
<div class="t" style="top:608.18px;font-size:8.8px;line-height:11.44px;color:#ececec;left:265.9px;transform-origin:0 50%;transform:scaleX(0.9792);">Graph</div>
<div class="t" style="top:608.18px;font-size:8.8px;line-height:11.44px;color:#ececec;left:305.15px;transform-origin:0 50%;transform:scaleX(0.9745);">Agents</div>
<div class="t" style="top:608.18px;font-size:8.8px;line-height:11.44px;color:#ececec;left:347.15px;transform-origin:0 50%;transform:scaleX(0.9597);">Journal</div>
<div style="left:125.05px;top:607.4px;width:0.9px;height:11.6px;background:#a0a0a0;"></div>
<div style="left:172.05px;top:607.4px;width:0.9px;height:11.6px;background:#a0a0a0;"></div>
<div style="left:297.05px;top:607.4px;width:0.9px;height:11.6px;background:#a0a0a0;"></div>
<div style="left:339.55px;top:607.4px;width:0.9px;height:11.6px;background:#a0a0a0;"></div>
<div class="t" style="top:609.61px;font-size:8.6px;line-height:11.18px;color:#c8c8c8;left:1050.65px;transform-origin:0 50%;transform:scaleX(0.9673);">00:05:21 / 00:05:21</div>
<div style="left:1129.6px;top:607.2px;width:55.9px;height:13.7px;background:#626200;border:0.8px solid #75750c;"></div>
<div class="t" style="top:609.28px;font-size:8.8px;line-height:11.44px;color:#deded0;left:1148.15px;transform-origin:0 50%;transform:scaleX(0.9659);">Start</div>
<svg style="left:0;top:0;width:1280px;height:720px;pointer-events:none" viewBox="0 0 1280 720"><defs><clipPath id="wc"><rect x="55.2" y="55.45" width="1130.25" height="567.35"/></clipPath></defs><g clip-path="url(#wc)"><path d="M640.8 253.7 L710.8 322.5 L701.6 331.7 L683.8 313.9 L683.8 384 L670.1 396.5 L670.1 348.3 L647.8 348.3 L647.8 421.2 L640.8 426.7 L633.8 421.2 L633.8 348.3 L611.5 348.3 L611.5 396.5 L597.8 384 L597.8 313.9 L580 331.7 L570.8 322.5 Z M647.8 279.2 L670.1 301.5 L670.1 336.7 L647.8 336.7 Z M633.8 279.2 L611.5 301.5 L611.5 336.7 L633.8 336.7 Z" fill="rgb(185,185,185)" fill-opacity="0.17" fill-rule="evenodd"/><path d="M165 281 L216.85 331.96 L210.04 338.78 L196.85 325.59 L196.85 377.52 L186.7 386.78 L186.7 351.07 L170.19 351.07 L170.19 405.07 L165 409.15 L159.81 405.07 L159.81 351.07 L143.3 351.07 L143.3 386.78 L133.15 377.52 L133.15 325.59 L119.96 338.78 L113.15 331.96 Z M170.19 299.89 L186.7 316.41 L186.7 342.48 L170.19 342.48 Z M159.81 299.89 L143.3 316.41 L143.3 342.48 L159.81 342.48 Z" fill="rgb(185,185,185)" fill-opacity="0.14" fill-rule="evenodd"/><path d="M1116 282 L1167.85 332.96 L1161.04 339.78 L1147.85 326.59 L1147.85 378.52 L1137.7 387.78 L1137.7 352.07 L1121.19 352.07 L1121.19 406.07 L1116 410.15 L1110.81 406.07 L1110.81 352.07 L1094.3 352.07 L1094.3 387.78 L1084.15 378.52 L1084.15 326.59 L1070.96 339.78 L1064.15 332.96 Z M1121.19 300.89 L1137.7 317.41 L1137.7 343.48 L1121.19 343.48 Z M1110.81 300.89 L1094.3 317.41 L1094.3 343.48 L1110.81 343.48 Z" fill="rgb(185,185,185)" fill-opacity="0.17" fill-rule="evenodd"/></g></svg>
<div style="left:55.2px;top:55.45px;width:1130.25px;height:567.35px;overflow:hidden;pointer-events:none;"><div class="t" style="left:44.8px;top:359.74px;font-size:23.04px;line-height:27.65px;font-weight:bold;letter-spacing:3.05px;color:rgb(185,185,185);opacity:0.11;">YOFOREX</div>
<div class="t" style="left:497.3px;top:378.02px;font-size:32.68px;line-height:39.22px;font-weight:bold;letter-spacing:2.95px;color:rgb(185,185,185);opacity:0.17;">YOFOREX</div>
<div class="t" style="left:995.3px;top:361.99px;font-size:20.67px;line-height:24.8px;font-weight:bold;letter-spacing:5.24px;color:rgb(185,185,185);opacity:0.13;">YOFOREX</div>
</div>
</body></html>
